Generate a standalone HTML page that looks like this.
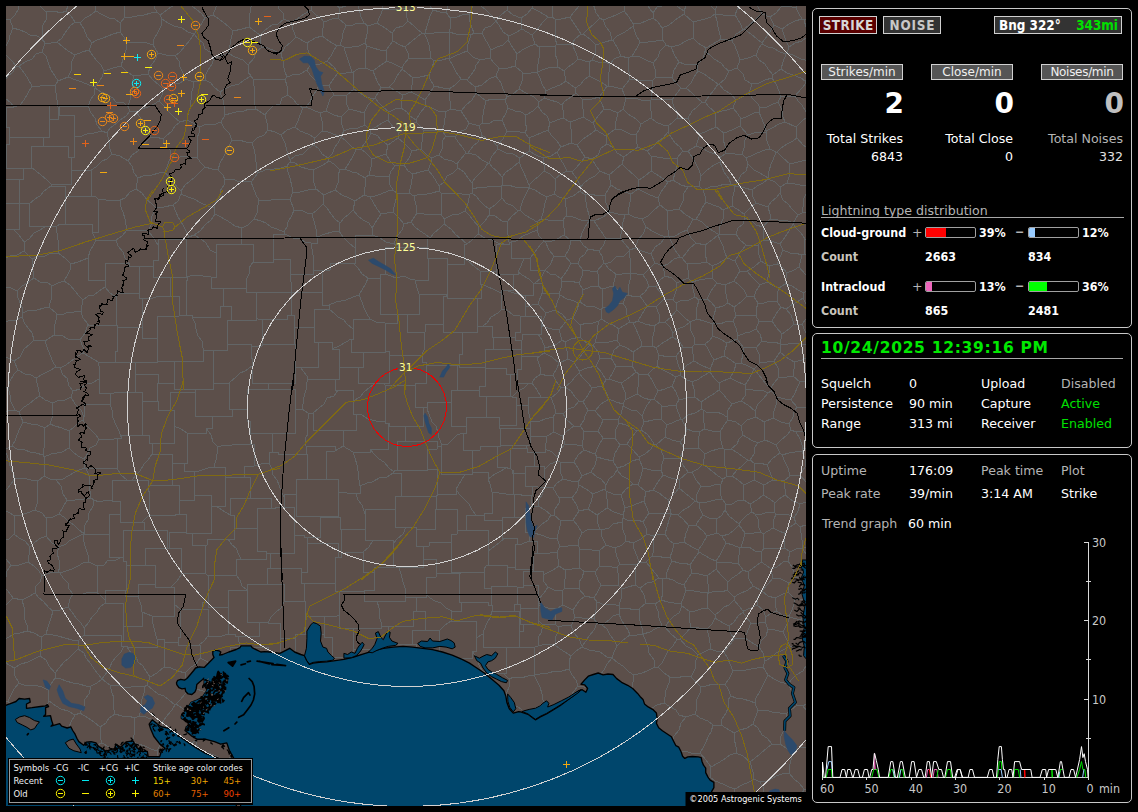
<!DOCTYPE html>
<html lang="en"><head><meta charset="utf-8"><title>Lightning Map</title>
<style>
html,body{margin:0;padding:0;background:#000;}
body{width:1138px;height:812px;overflow:hidden;position:relative;font-family:"DejaVu Sans","Liberation Sans",sans-serif;font-size:12.6px;color:#fff;}
#map{position:absolute;left:6px;top:6px;width:800px;height:800px;background:#5c4f4a;overflow:hidden;}
#map svg{position:absolute;left:0;top:0;}
.pnl{position:absolute;left:812px;width:318px;border:1px solid #c8c8c8;border-radius:5px;box-sizing:content-box;}
.t{position:absolute;white-space:nowrap;line-height:16px;height:16px;}
.r{text-align:right;}
.b{font-family:"DejaVu Sans Condensed","DejaVu Sans","Liberation Sans",sans-serif;font-weight:bold;font-size:12.4px;}
.g{color:#b4b4b4;}
.gr{color:#00e000;}
.btn{position:absolute;box-sizing:border-box;border:1px solid #d0d0d0;text-align:center;white-space:nowrap;}
.lbl{background:#555;height:16px;line-height:14px;font-size:12px;color:#f0f0f0;}
.big{position:absolute;font-family:"DejaVu Sans","Liberation Sans",sans-serif;font-weight:bold;font-size:28px;line-height:30px;height:30px;text-align:right;}
.bar{position:absolute;box-sizing:border-box;width:51px;height:11px;border:1px solid #a0a0a0;border-radius:2px;background:#000;overflow:hidden;}
.bar i{position:absolute;left:0;top:0;height:9px;display:block;}
.hr{position:absolute;height:1px;background:#a8a8a8;}
#legend{position:absolute;left:2px;top:752px;width:244px;height:45px;box-sizing:border-box;border:1px solid #a0a0a0;background:#000;font-size:9.6px;font-family:"DejaVu Sans Condensed","DejaVu Sans","Liberation Sans",sans-serif;}
#legend span{position:absolute;white-space:nowrap;line-height:12px;}
#copy{position:absolute;left:679px;top:786px;width:121px;height:14px;background:#000;font-size:9.6px;line-height:13px;font-family:"DejaVu Sans Condensed","DejaVu Sans","Liberation Sans",sans-serif;color:#fff;text-align:center;white-space:nowrap;}

</style></head>
<body>
<div id="map">
<svg width="800" height="800" viewBox="6 6 800 800">
<path fill="none" stroke="#626566" stroke-width="1" shape-rendering="crispEdges" d="M806 704l-3 2M806 710l-3-4M806 112l-4-7-4-4-3-5M806 83l0 0M795 96l7-8 4-5M729 71l-4 8-6 5M729 71l-4-3-4-5-7-4-3-3-6-5M705 51l-2 8-6 6M698 71l-1-6M698 71l6 3 7 5 7 5M718 84l1 0M737 68l-8 3M737 68l6 6 2 6 7 4M752 84l-3 9M749 93l-7 4-6 3M719 84l5 6 7 4 5 6M737 68l3-8M752 84l7-1 6-3 7-2M740 60l8-2 8-3M772 78l1-3M756 55l3 5 6 4 3 5 5 6M717 6l-2 4M711 6l4 4M740 60l-2-6-3-8-3-5M706 48l-1 3M706 48l7-4 8-5M721 39l11 2M693 38l5 5 8 5M693 38l1-9-1-7M693 22l4-1 8-2 6-2 4-3M721 39l-2-8-1-4-1-6-2-7M686 6l-2 5M715 10l1 4M693 22l-9-8M684 14l0-3M715 14l1 0M496 21l5-6 6-5M496 21l-5-6-5-5-5-4M507 10l0-4M507 10l6 5 8 3M532 6l0 2M521 18l6-4 5-6M552 6l0 2 0 9M552 17l-4 0M532 8l8 4 8 5M552 17l3 2M555 19l6 0 9-2M570 17l4-5 5-6M693 38l-7 3-7 4-8 2M697 65l-5-1-8 0-5-2M671 47l4 9 4 6M662 28l0 5 1 7M662 28l7-3 5-4 4-3 6-4M663 40l3 5M671 47l-5-2M663 40l-7 1-8 1-8 0M640 42l-3 6-5 8M632 56l8 1 6 3 7 3M666 45l-6 6-2 6-5 6M594 6l0 0M594 6l-1 0M311 243l2 12M311 243l-6-1-6-4-6 0-8-4M313 255l0 19-23 0M285 234l-12 0 0 25M290 274l0-15-17 0M317 237l8-3 7-2 7-1M317 237l0 6-6 0M353 263l-23 0 0 7M353 263l2 0 0-15M330 270l-17 0 0-15M355 248l-6-5-6-6-4-6M330 270l-8 0 0 24M290 274l1 8 1 10M292 292l30 0 0 2M449 59l4 7 3 6 5 7M449 59l0-1M434 86l-4-7-1-4M434 86l9 2 6 1M449 58l-7 2-8 1M461 79l-6 6-6 4M429 75l3-7 2-7M449 58l1-6-1-6 1-8-1-5M425 33l5 1 8-2 5 0 6 1M425 33l-1 0M424 33l3 6 2 6 1 6 1 7M434 61l-3-3M317 237l-1-8-2-8-2-7M339 231l1-8M340 223l-5-4-4-5-4-6-4-4M323 204l-6 6-5 4M284 232l1 2M284 232l3-5 1-5 4-7 2-5M312 214l-5-1-6-3-7 0M6 387l2 0M6 412l3-2 6 0M8 387l2 8 1 7 4 8M19 412l5-5 5-3 6-5 5-3M19 412l-4-2M18 370l7 4 6 1 5 3M18 370l-4 4-4 7-2 6M36 378l2 9 2 9M290 162l-3 4M290 162l5 1 6 4 7 2 5 1M287 166l1 6 2 6 2 9 1 5M293 192l7 0 8-2 8-1M313 170l0 6 1 7 2 6M323 204l1-9M324 195l-8-6M294 210l-4-11M290 199l3-7M42 52l4 4 3 9 2 5 4 6 3 5M42 52l3-9M45 43l6 0 6-1M68 77l-10 4M68 77l3-6 1-10 3-6M57 42l6 5 5 4 7 4M46 12l0 8-3 5-1 7 0 7M46 12l-4-4-2-2M19 6l-1 4-3 5-5 5M42 39l-5-3-7-1-5-3-5-2-7-2M13 28l-3-8M6 19l4 1M6 46l3-6 1-5 3-7M6 55l1 1 5 5 4 5M42 52l-6 2-4 5-7 3-6 4M45 43l-3-4M16 66l3 0M806 747l-1 0-6 1-8 4M803 706l-6-1M797 705l-6 5-4 3M787 713l-1 5-1 6-2 8-2 4-1 8M791 752l-5-4-6-4M232 755l-4 5M236 773l-4 0M228 760l1 3M229 765l1 1 2 7M232 773l0 1M240 806l-4-5 0 0M294 535l0 18-24 0M294 535l0-28-19 0M257 529l0-21 14 0M257 529l0 22 9 0M266 551l0 2 4 0M275 507l0 1-4 0M754 463l-4-3M754 463l6 0 7 2M750 460l4-6 1-7 3-4M767 465l5-6 8-6M776 445l4 8M776 445l-6-3-5-2M765 440l-7 3M796 127l6-6 4-3M796 127l-11-5M795 96l-7 0-7 1M781 97l-3 5M785 122l-2-5-1-7-4-8M749 93l3 5 6 6 2 4M781 97l-2-6-3-7-4-6M778 102l-7 3-4 2-7 1M805 81l-4-3-8-3-6-2-6-4M805 81l1-1M806 60l-1 0-4-1-8-4-6-2M781 69l2-7 3-8M787 53l-1 1M806 83l-1-2M773 75l8-6M756 55l3-7 3-4M762 44l6 3 5 1 7 4 6 2M731 184l-6 0-7 2-8 1-7 3M731 184l4 2M735 186l-1 6-2 8 0 6M706 202l-1-6-2-6M706 202l7 3 6 2 4 3M723 210l9-4M686 88l-5 0M686 88l5-5 3-6 4-6M679 62l-5 8-2 8M681 88l-4-4-5-6M653 63l2 6 1 8M672 78l-9-1-7 0M718 84l-4 6-5 6-4 6M733 108l3-8M733 108l-6 2-5 1-6 2M716 113l-7-6-4-5M686 88l6 5 4 4 6 5M681 88l-4 5-5 7M672 100l2 7 3 5 0 6M677 118l11 0M688 118l4-7 5-4 5-5M702 102l3 0M606 136l1 8M606 136l-10-6M607 144l-6 4-3 7-6 4M592 159l-7-2M596 130l-7 5-6 4-6 6M585 157l-4-6-4-6M570 122l6-2 7-3M570 122l1 7 0 7 0 7M583 117l10 6M596 130l-3-7M571 143l6 2M615 129l7 1 8 4 6 1M615 129l1-8 2-8M618 113l5-4M623 109l5 5 8 5 5 5M636 135l3-5 2-6M606 136l9-7M607 144l7 4 3 5 7 4M624 157l8-6 6-4M638 147l-2-6 0-6M604 109l-5 6-6 8M604 109l7 1 7 3M651 118l-10 6M651 118l5 4 7 3 5 1M638 147l9 4M647 151l6-4 4-5 6-4 5-6M668 126l0 6M781 7l0-1M781 7l7-1 8 2M796 8l1-2M789 47l6-4 7-2 4-3M789 47l-3-6-2-6-2-6M782 29l7-5 6-3 7-2M806 27l-2-7M804 20l-2-1M762 43l0 1M762 43l5-7 3-4 4-7M774 25l8 4M787 53l2-6M774 25l-4-8M770 17l6-4 5-6M796 8l3 6 3 5M806 19l-2 1M735 15l5 8 3 7M735 15l2-5 3-4M744 29l-1 1M744 29l5-4 6-5 7-6M762 14l-4-7-1-1M732 41l4-7 7-4M716 14l7 1 6 0 6 0M762 43l-5-4-6-5-7-5M770 17l-8-3M469 14l-7 1-5 2-7 1M469 14l0 5 3 9 2 5M474 33l-3 2M471 35l-7-1-8 0-7-2M449 32l2-6-1-8M496 21l0 0M473 6l-4 8M496 21l-5 5-6 2-3 5M482 33l-8 0M449 59l6-3 7-3 5-2M449 33l0-1M467 51l1-7 3-9M446 12l2-6M446 12l-6 0-7-2M430 6l3 4M450 18l-4-6M425 33l2-7 1-3 2-7 3-6M555 19l0 7 1 6-1 7 2 5M557 44l9 0 6 0M570 17l3 5 4 6 4 6M572 44l3-5 6-5M600 18l-6 6-6 5-5 5M600 18l-4-5-2-7M581 34l2 0M562 105l1 5 0 8M562 105l3-4 6-4 5-4M563 118l7 4M583 117l0-8-1-10M576 93l6 6M604 109l-2-5-3-7M582 99l10 0 7-2M662 28l-4-6-5-4M653 18l-7 3-5 2-8 1M640 42l-4-7-3-9M633 24l0 2M625 6l-1 5M600 18l3 2M624 11l-8 4-5 2-8 3M610 64l-5-2-7 0-6-2M610 64l4-5 7-3M621 56l-3-7-5-9M596 45l-1 9-3 6M596 45l9-3 7-2M612 40l1 0M628 58l-7-2M628 58l4-2M633 26l-5 4-5 3-6 3-4 4M583 34l7 5 6 6M603 20l3 7 4 5 2 8M633 24l-4-7-5-6M648 6l2 3 3 4M653 13l4-6 5-1M653 18l0-5M684 11l-6-4-1-1M296 494l0 22 24 0M296 494l-12 0 0 3M304 537l16 0 0-20M304 537l0-2-10 0M284 497l0 10-9 0M320 516l0 1 0 0M472 472l16 0 0 7M472 472l0 2-7 0M488 479l2 5 2 8M492 492l0 21-8 0M484 513l0 2-8 0M465 474l-4 7-5 8M476 515l-4-5-3-6-5-5-5-5-3-5M484 513l0 7 18 0M502 520l0 18 3 0M466 530l0-15 10 0M466 530l22 0 0 21M505 538l-5 4-5 4-7 5M465 474l-24 0 0-28M441 446l-4 0 0 3M456 489l0 5-19 0M437 494l0-25-10 0M437 449l-10 0 0 20M537 72l8-3 6-2 7 0M537 72l1-8 1-6 0-4 0-7M558 67l-1-8-2-5 0-8M539 47l8-1 8 0M483 326l-6 0 0-1M483 326l4-3 4-6 7-4 4-4M469 298l8 0 0 27M469 298l12 0 0-14M502 309l-1 0 0-16M481 284l7 3 5 2 8 4M296 494l0-15 11 0M269 463l3 6 1 6 4 5 2 5 3 8 2 4M269 463l0-11 9 0M307 479l0-25-10 0M278 452l0 2 19 0M544 98l-5 4M544 98l2-7M539 102l-5-5-8-4-7-4M537 72l3 6 2 6 4 7M537 72l-6 1-8 0M519 89l3-8 1-8M509 36l-1 4M509 36l6-3 7-4M508 40l5 8 4 6M517 54l5-4 6-3 7-3M522 29l10 6M535 44l-3-9M496 21l3 4 4 7 6 4M482 33l3 6 3 5 3 6M491 50l6-3 6-2 5-5M521 18l1 11M537 72l0 0M539 47l-4-3M523 73l-8-7M515 66l2-12M548 17l-6 6-5 7-5 5M557 44l-2 2M480 60l10-2M480 60l-4 5-1 4-4 6-4 5M490 58l4 5 5 5M467 80l8 7M475 87l7-2 7-6 7-3M496 76l3-8M467 51l6 6 7 3M491 50l-1 8M461 79l6 1M515 66l-7 2-9 0M519 89l-6 5-6 3M507 97l-4-8-2-6-5-7M335 190l3-7 0-8 2-5M335 190l-11 5M313 170l6-3 4-2 6-4M329 161l5 3 6 6M389 87l7 4 7 4M389 87l5-5 3-6 5-7M413 78l-6-5-5-4M413 78l-1 7-1 7M411 92l-8 3M434 86l-4 7-5 7M425 100l-8-5-6-3M429 75l-9 2-7 1M425 100l1 6M426 106l-6 7-4 7M401 108l6 4 3 4 6 4M401 108l0-6 2-7M404 165l4 6 5 3M404 165l5-7 3-7M431 158l-5-4-5-5M431 158l0 5-3 7M412 151l9-2M413 174l7-2 8-2M439 155l-8 3M439 155l5 4 8 2 5 3M457 164l1 4M458 168l-5 5-6 3-3 6-5 4M428 170l5 6 3 5 3 5M355 248l0-13 18 0M340 223l4-5 5-4 4-4M373 235l-1-7M353 210l5 6 5 4 6 3 3 5M335 190l7 5 7 3 6 3M353 210l2-9M18 370l-4-9M6 357l2 1 6 3M115 351l2 0 0-24M115 351l0 11 19 0M117 327l25 0 0 0M134 362l23 0 0-22M142 327l0 11 15 0M157 338l0 0 0 2M99 379l0 14 15 0M99 379l1-9-2-8M114 393l0-1 4 0M118 392l17 0 0-18M98 362l17 0 0-11M135 374l0-12-1 0M179 316l0-20-20 0M179 316l-22 0 0 22M145 298l8 0 6-2M145 298l-3 0 0 29M99 379l-7 4-6 1-6 5-7 2M98 362l-8-5-7-4M73 391l-4-5-2-8-4-3-3-7M83 353l-5 3-7 5-5 4-6 3M135 374l23 0 0 9M174 361l0 6 0 0M174 361l-17 0 0-21M158 383l16 0 0-16M55 86l1 7 1 7 1 7 0 7M55 86l-7-1-8 1-8 0M32 86l-4 7-4 7-4 5M20 105l29 0 0 14M49 119l9 0 0-5M58 81l-3 5M19 66l6 8 3 5 4 7M68 77l8 3 6 2 7 3 6 2M59 115l0-9 29 0M59 115l-1-1M88 106l3-7 3-4 1-7M95 87l0 1M59 115l15 0 0 22M88 106l3 7 4 5 2 7 5 6M102 131l-8 2-5 0-7 3-8 1M130 111l-4 5-6 4-3 3-7 5-3 5M130 111l-2-4M128 107l-4-4-8-1-3-4-7-4-5-2-6-4M102 131l5 2M6 127l0-20 8 0M6 127l0 0M14 107l-4-5-4-3M20 105l-6 2M49 119l0 18-10 0M9 136l0 1 30 0M9 136l0-9-3 0M9 136l0 8-3 0M6 144l0 0M16 66l-3 6-5 4-2 3M431 58l-8 0-8 1-6-1M402 69l0-1M409 58l-5 6-2 4M401 108l-6 1-6 3M389 112l-6-5-4-4-4-5M389 87l-8 1M381 88l-6 10M262 47l6 1 7 3 6 3M262 47l-6 5-2 6-6 7M248 65l0 7 3 4M281 54l2 7 0 3 2 8 2 5M253 79l-2-3M253 79l6 0 6 1 9-1 4 0 7 0M287 77l-2 2M96 11l-1-5 0 0M96 11l-7 5-4 2-5 5M66 11l5 5 4 6M66 11l2-5M80 23l-5-1M57 42l5-4 3-5 5-7 5-4M46 12l8-1 7 2 5-2M472 472l0-22 8 0M442 445l6-1 5-5 4-4 6-2M442 445l-1 1M480 450l-17 0 0-17M442 445l-3-7-1-5-2-7-4-4-3-8-2-5M451 402l-24 0 0 7M451 402l0 24 15 0M463 433l3 0 0-7M806 789l-2 0M791 752l0 8-1 4-1 9M804 789l-5-6-5-4-5-6M804 789l-2 5-3 7-1 5M750 762l5-4 5-4 7-6 5-4M750 762l-7-6-7-3M736 753l0-6-2-9 0-5M772 744l-5-6-5-3-4-7-5-4M753 724l-6 4-7 2-6 3M787 713l-7 0-8-1-6-2-8 1M780 744l-8 0M758 711l-3 7-2 6M797 705l-3-7-3-8-3-6M758 711l-3-8M755 703l1-5 4-7 3-6 2-4 3-6M788 684l-8-2-6-3-6-4M788 684l4-5 4-4 7-4 3-5M803 448l-3-9-4-7M803 448l-1 3M776 445l5-5 6-5 4-5M780 453l2 2M791 430l5 2M802 451l-7 1-6 1-7 2M767 465l3 7 3 8M790 476l-2-8-3-6-3-7M790 476l-6 5M773 480l11 1M805 649l1 1M805 649l1-6M788 592l-7 3-6 3M788 592l1-9M789 583l-8-4-8-1M775 598l-7-2-6-5M773 578l-5 6-6 7M484 569l0 19 7 0M484 569l0 3-24 0M460 572l0 1-1 0M459 573l0 29 2 0M461 602l27 0 0 3M488 605l3 0 0-17M507 567l0-2-20 0M507 567l0 19 9 0M487 565l-3 4M516 586l-25 0 0 2M457 534l0-4 9 0M457 534l-6 0 0 8M488 551l0 14-1 0M451 542l0 30 9 0M436 577l0-4 23 0M436 577l0-18-13 0M451 542l-22 0 0 4M423 559l0-13 6 0M269 463l-8 1-7 2M254 466l-10 0 0 11M271 508l0-10-21 0M244 477l6 0 0 21M267 584l0-16 9 0M267 584l17 0 0 18M276 568l25 0 0 4M284 602l0-1 20 0M304 601l0-18 5 0M309 583l-8 0 0-11M307 543l0-6-3 0M307 543l0 29-6 0M270 553l0 15 6 0M268 623l12 0 0 14M268 623l0-1-9 0M259 622l0 14-21 0M280 637l0 16M268 652l0-5-16 0M241 647l-1 0M240 647l-2-11M247 590l0 32 12 0M247 590l0-6 20 0M284 602l-3 6-5 4-5 5-3 6M295 638l-15 0 0-1M295 638l0 14M230 652l0-5 10 0M228 607l0 27 7 0M228 607l-20 0 0-5M202 609l0-7 6 0M202 609l6 0 0 27M208 636l6 0 8 0 6-2 7 0M247 590l0 0 0 0M247 590l-19 0 0 17M238 636l-3 0 0-2M209 663l-3-2-6-3M199 645l1 0 0 13M199 645l5-4 4-5M326 479l0-28 9 0M326 479l12 0 0 13M338 492l5 0 8 2 5-1M353 452l-10-6M353 452l2 6 2 7 1 6 1 9 1 6M360 486l0 7-4 0M343 446l-8 5M307 479l0 0 19 0M297 454l9 0 0-8M306 446l29 0 0 5M320 516l18 0 0-24M340 529l0-12-20 0M340 529l25 0 0-14M365 515l0 0 0-1M365 514l-3-9-4-5-2-7M313 413l0 17 30 0M313 413l-5 0M343 430l0 0 0 16M308 413l0 6-1 6 1 9-3 5 1 7M728 582l-7-7-5-6M728 582l4-4 5-3 6-5M743 570l-5-7M738 563l-6 0-9-1-6 0M716 569l1-7M707 576l1 8 1 9M707 576l9-7M727 590l-5 2-7-1-6 2M727 590l1-8M734 597l-7-7M734 597l5-3 9-4 5-4M753 586l-4-7-1-7M748 572l-5-2M726 543l-3 6-3 6-4 6M726 543l7 2 7 3M716 561l1 1M740 548l-1 7-1 8M794 518l-5-3-6-1-7 0M794 518l4-7 2-7M800 504l-7-3-8-6M785 495l-6 4-4 4M775 503l-1 9M776 514l-2-2M754 463l0 10 0 7M773 480l-9 5M754 480l10 5M784 481l1 8 0 6M775 503l-5-4-7-4M764 485l-1 10M533 569l0-16 4 0M533 569l-18 0 0-8M537 553l0-12-8 0M515 561l0-17 2 0M529 541l-7 3-5 0M505 538l12 0 0 6M507 567l8 0 0-6M692 573l-4 5-4 7M692 573l7 1 8 2M708 593l1 0M708 593l-8-1-6-1-8-1M686 590l-2-5M619 614l2 5 3 5 4 6 2 5M619 614l-6 2-4 4-7 5M602 625l5 4 3 6 4 5 3 6M630 635l-7 5-6 6M620 608l7 0 7 2 5-1M620 608l-1 6M639 609l0 7 1 5 2 7 0 6M642 634l-5 1-7 0M620 608l-1-2M597 623l5 2M597 623l-3-4M594 619l2-9 1-8M619 606l-6-2-8 1-8-3M597 623l-3 7-5 6-3 5-4 5M582 647l0-1M582 647l7 3 6 1 5 1 7 5 5 1M612 658l0 0M612 658l2-6 3-6M571 656l-6-4-5-3-5-4M571 656l5-5 6-4M555 645l0-7 3-6 0-5M582 646l-3-7-5-6-3-7M571 626l-5-1-8 2M594 619l-6-1-6 0-7-1M571 626l4-9M692 573l-2-8M716 561l-5-2-7-4-5-3M690 565l4-6 5-7M726 543l-4-7M722 536l-5-3M717 533l-10 3M707 536l-5 9-4 5M699 552l-1-2M806 147l-3-2-6-7M806 160l-8 2-8 2M797 138l-4 3-6 3-6 4-4 4M777 152l6 6 7 6M796 127l1 11M785 122l-6 2-7 4-6 3M760 108l-1 4M759 112l2 5 3 7 2 7M733 108l5 6 3 5M759 112l-5 1-6 3-7 3M679 209l7 6 7 4M679 209l-11 2M693 219l-3 6-3 5M668 211l-1 6 0 6 1 7 0 6M668 236l1 0M669 236l6 0 7-4 5-2M701 176l-2 10M701 176l-2-6-3-6-4-7-4-6M699 186l-11 1M688 187l-7-2-8-5M673 180l2-7 2-8 0-7M677 158l6-7M688 151l-5 0M720 162l2 5 2 5 5 7 2 5M720 162l-6 3-7 5-6 6M703 190l-4-4M706 202l-4 6-2 5-4 6M679 209l4-8 1-8 4-6M693 219l3 0M668 182l5-2M668 182l-4 6-3 4-3 6M658 198l2 7M668 211l-8-6M668 182l-6-4-6-4-5-3M651 171l0-7 0-8M651 156l6 1 6 1 8 0 6 0M647 151l4 5M668 132l3 5 4 6 4 3 4 5M696 219l6 3 4 4 7 5 5 3M723 210l0 9-3 7-1 8M718 234l1 0M735 186l0 0M732 206l5 3 7 5M752 190l-7-2-10-2M752 190l1 7 3 6M744 214l6-6 6-5M780 187l0 6M780 187l-5-5-7-3M768 179l-5 4-6 3-5 4M780 193l-3 4-6 5-3 5M756 203l12 4M794 324l-5 5-7 5M794 324l-3-9-5-6M782 334l-6-7-4-6M772 321l4-7 5-7M786 309l-5-2M767 282l5 3 7 3M767 282l2-9 0-7M787 273l-5-6-5-3M787 273l-2 11M779 288l6-4M769 266l8-2M783 250l-3 7-3 7M783 250l7 3 5 0 7 2M799 267l3-12M799 267l-5 3-7 3M777 302l4 5M777 302l0-8 2-6M803 298l1-5M803 298l-6 4-4 2-7 5M804 293l-6-3-6-4-7-2M651 100l-7 1-6-2-5-1-7 1M651 100l0-1M651 99l1-8 0-10M652 81l-6-1-8 0-8-1M630 79l-4 5-4 5M622 89l4 10M651 118l0-7-1-6 1-5M623 109l3-10M672 100l-7-1-6 1-8-1M677 118l-5 5-4 3M656 77l-4 4M628 58l0 6 1 8 1 7M608 86l0-7 1-7 1-8M608 86l6 1 8 2M608 86l-1 0M607 86l-4 6-4 5M696 146l4-12M696 146l6 2 7 4 6 2 6 3M700 134l7-3 9-4M721 157l5-4M726 153l-1-7-2-7 1-6M724 133l-8-6M688 118l3 7 3 5 6 4M688 151l8-5M720 162l1-5M716 113l-1 6 1 8M741 119l-1 7M740 126l-8 4-8 3M740 126l8 9M726 153l9 1 7 0M742 154l2-6 1-8 3-5M766 131l0 2M766 133l-6-1-6 1-6 2M578 59l11 3M578 59l-4 4-6 4-4 4M589 62l0 8 0 6M589 76l-5 4-4 5-5 3M564 71l2 10M566 81l9 7M572 44l4 9 2 6M592 60l-3 2M558 67l6 4M607 86l-6-4-6-3-6-3M576 93l-1-5M546 91l6-3 8-3 6-4M544 98l6 2 7 2 5 3M436 495l0 14-1 0M436 495l0 1-35 0M435 509l0 20-19 0M395 509l0-13 6 0M395 509l0 18 11 0M406 527l10 0 0 2M457 534l0-25-22 0M437 494l0 1-1 0M429 546l-13 0 0-17M393 473l8 0 0 23M393 473l-6 4-6 0-9 5-5 1-7 3M365 514l0-5 30 0M437 449l0-8-32 0M427 469l0 1-30 0M405 441l-8 0 0 29M393 473l0-1 1 0M353 452l17 0 0-3M370 449l4 5 5 5 5 3 5 6 5 4M394 472l0-2 3 0M469 298l-22 0 0-2M480 271l0 13 1 0M480 271l-5-4-7-6-4-3M464 258l0 6-17 0M447 296l0-32 0 0M407 314l12 0 0-20M407 314l0 18 18 0M425 332l0-8 18 0M443 324l0-28 3 0M419 294l27 0 0 2M462 332l-19 0 0-8M462 332l0 22-3 0M459 354l0 11-17 0M442 365l-16 0 0-3M422 355l3-8-1-6 1-9M422 355l0 7 4 0M477 325l0 7-15 0M447 296l-1 0 0 0M332 349l0-7-14 0M332 349l7-3 7-4 5-3M329 309l-15 0 0 23M329 309l6 5 3 3 6 3 3 4 6 5M314 332l0 10 4 0M353 329l0 10-2 0M397 314l-17 0 0-36M397 314l0 9-12 0M385 323l-9-1-6-3M370 319l-3-5-3-6-2-6-3-7M359 295l3-5 4-7 2-5M368 278l0 0 12 0M329 305l0 0 0 4M329 305l7-3 5-1 5-1 7-3 6-2M353 329l0-10 17 0M353 263l5 5 4 6 6 4M329 305l-7 0 0-11M480 271l16 0 0-9M501 293l0-3 4 0M496 262l0 12 17 0M505 290l8 0 0-16M464 258l0-14 3 0M496 262l0-18 8 0M504 244l-6-1-6-3-7-2-7-4M467 244l5-4 6-6M507 222l0 7 1 6 1 7M507 222l-5-1-7-5-6-1M489 215l-4 6-6 6M504 244l5 0 0-2M479 227l-1 7M646 227l6 4 6 3 7 3M646 227l-3 7-5 6-3 8M665 237l-4 6-6 4-4 7M635 248l7 3 9 3M660 205l-6 5-6 6-6 3M642 219l4 8M668 236l-3 1M571 241l-7-6M571 241l9-1M580 240l2-7 3-6 4-6M566 216l7 1 8 3 8 1M566 216l-3 4M563 220l1 8 0 7M658 198l-8-3-4-2-8-4M642 219l-8-2-6-3M628 214l1-7 1-5 1-8M638 189l-7 5M651 171l-6 5-6 4M638 189l1-9M624 157l-2 7M639 180l-5-5-7-6-5-5M605 195l6-10M605 195l-7 1-7-2-6 1M585 195l-5-4M611 185l-2-10M581 187l-1 4M581 187l3-4 5-4 6-3 5-5M600 171l9 4M628 214l-3 1M625 215l-7-1-8-2M610 212l-4-9-1-8M631 194l-6-2-8-3-6-4M590 220l-1-5-2-7-1-6-1-7M590 220l4 1M594 221l9-4 7-5M565 199l1 8 0 9M565 199l8-3 7-5M589 221l1-1M622 164l-7 6-6 5M592 159l4 7 4 5M585 157l-4 5-5 6-4 4M572 172l5 7 4 8M307 376l0 3 28 0M307 376l0 6-1 8-2 7-1 7-1 5M313 413l6-5 5-4 3-6 7-2 4-6M308 413l-6-4M338 390l-3 0 0-11M307 376l-7-9M300 367l18 0 0-25M332 349l7 0 0 23M335 379l4 0 0-7M272 433l23 0 0-24M272 433l-22 0 0-12M247 415l0 6 3 0M247 415l0-26 22 0M269 389l26 0 0 20M278 452l-6 0 0-19M302 409l-7 0M239 444l11 0 0-23M239 444l15 0 0 22M300 367l0 0-5 0M268 383l27 0 0-16M268 383l1 6M210 350l17 0 0-6M210 350l3 0 0 26M227 344l24 0 0 14M229 383l-16 0 0-7M229 383l7-6 4-4 5-2 7-5M252 366l0-8-1 0M174 361l29 0 0-13M203 348l0 2 7 0M174 367l0 22 21 0M195 389l18 0 0-13M212 416l20 0 0-7M212 416l-17 0 0-24M232 409l-3 0 0-26M195 392l0 0 0-3M232 409l15 0 0 6M268 383l-16 0 0-17M216 253l0 24-5 0M216 253l-6-3-4-7-5-4-7-4M194 235l-5 2M186 239l3-2M186 239l0 37 4 0M211 277l-8-1-6-1-7 1M179 316l0-1 7 0M170 277l0 19-11 0M170 277l0 0 18 0M186 315l1-6-1-6 0-8 1-4-1-7 2-7M203 348l-1-7-4-5-2-7-1-6-3-6M186 315l6 0 0 2M294 327l0-12-7 0M294 327l0 17-13 0M287 315l0 4-29 0M258 319l4 0 0 27M281 344l-19 0 0 2M292 292l-1 0 0 0M291 292l0 23-4 0M314 332l0-5-20 0M295 367l0-23-14 0M251 358l0-12 11 0M457 164l3-4 6-7M458 168l6 4 4 6 4 5M472 183l3-5 5-5 5-5 3-5M488 163l-6-3-6-5-8-2M468 153l-2 0M498 149l-1-3M498 149l-6 7-3 7M489 163l-1 0M497 146l-4-5-6-2-5-4M468 153l5-7 5-4 4-7M461 111l4 6 4 6M461 111l-10-2M445 112l0 6-1 7-2 6M445 112l6-3M469 123l-3 6-7 3-4 5M455 137l-9-1M446 136l-4-5M449 89l0 5 1 7 1 8M476 93l-4 7-6 5-5 6M476 93l-1-6M426 106l6 2 6 3 7 1M416 120l0 2M424 131l-3-4-5-5M424 131l8-1 10 1M466 153l-3-5-5-6-3-5M482 135l-3-9M479 126l-10-3M439 155l3-6 0-8 4-5M421 149l1-7 0-5 2-6M370 130l1 3M370 130l6-3 6-4 6-3M371 133l7 3 3 4 7 5M388 120l5 7 6 6M388 145l10-7M398 138l1-5M361 149l3-5 4-5 3-6M361 149l5 4 6 6M372 159l8-3 6-2M386 154l2-9M389 112l-1 8M416 122l-7 4-5 3-5 4M404 165l-9 1M412 151l-4-4-4-4-6-5M395 166l-5-5-4-7M341 136l0 1M341 136l-5-1-8-3-6-1M341 137l-3 6-3 4-3 7-4 4M328 158l-6-4-3-5-5-4M322 131l-7 7M314 145l1-7M356 150l-5-4-5-5-5-4M356 150l-3 6-4 7-4 6M329 161l-1-3M345 169l-5 1M290 162l0-2M290 160l5-4 8-2 6-6 5-3M320 113l2 8 0 10M320 113l-7-3-7-3M306 107l-3 1M303 108l-3 7-2 6-3 6M295 127l5 4 8 3 7 4M290 160l-2-5-2-8-1-4-4-8M281 135l6-5 8-3M349 109l-8 8M349 109l8 2 7 2M365 125l-7 3-7 0-7 3M365 125l-1-12M344 131l-2-6-1-8M361 149l-5 1M370 130l-5-5M341 136l3-5M375 98l-1 1M374 99l-6 6-4 8M320 113l6-2M326 111l8 4 7 2M186 239l-28 0 0 6M189 237l-3-6-3-6-5-8-2-5-3-7M173 205l-9 2-8 1M156 208l-4 8-1 9-3 6M148 231l5 6 5 8M136 189l6 4 5 7 4 3 5 5M136 189l-6 3-5 6-5 2M120 200l0 5 3 7 2 7 1 6 1 5M148 231l-6-1-9 0-6 0M170 277l-17 0 0-17M190 276l-2 0 0 1M158 245l0 15-5 0M171 156l-3 8-3 8M171 156l-1-6-5-4-2-7M163 139l-7-2-5 0M151 137l-5 5-5 3-3 6-6 4-4 6M165 172l-6 1-7 2-9 1-5 2M138 178l-4-5-2-7-4-5M197 157l3 5 5 5M197 157l-8 0-5-1-8 2-5-2M181 191l4-6 5-4 5-4 4-4 6-6M181 191l-4-4-4-6-5-5-3-4M136 112l-6-1M136 112l4 5 3 8 4 5 4 7M112 154l-3-7 0-6-2-8M112 154l8 2 8 5M136 189l2-11M173 205l5-4 3-7M181 194l0-3M145 298l-6 0 0-5M153 260l0 6-13 0M139 293l0-27 1 0M127 230l-5 6-6 4M116 240l2 6 5 6 2 6 4 5M129 263l0 3 11 0M74 137l0 20-6 0M39 137l4 0 0 9M43 146l25 0 0 11M112 154l-5 5-5 2-6 6-5 3M91 170l-20 0 0-7M68 157l3 0 0 6M407 6l-1 2M382 6l1 3M406 8l-6 1-8 0-9 0M402 68l-8-4-7-3M381 88l-4-7-2-5-2-5M387 61l-6 4-8 6M393 41l7 4 5 2M393 41l-1-8M392 33l4-5 7-2 5-5M405 47l7-6 5-4 5-4M422 33l-5-4-3-3-6-5M409 58l-1-5-3-6M387 61l-1-11M386 50l7-9M406 8l0 7 2 6M383 9l-3 7-3 7M377 23l8 5 7 5M424 33l-2 0M346 6l-1 0-5 2M340 8l-3-2M262 47l-2-7 0-5M248 65l-5-5-8-3-7-4M249 27l4 3 7 5M249 27l-7 2-9 2M233 31l-2 8-1 6-2 8M136 112l5-3 7-2 6-3 5-3M163 139l3-3 6-5 3-5 5-4M159 101l6 6 4 5 5 5 6 5M199 127l0 6-2 5 0 7 1 7-1 5M199 127l-6-4-6-3M187 120l-7 2M220 92l5-3 6-3 8-2 5-4 7-4M220 92l3 8 1 6 1 9M253 79l1 7 1 6-1 5 0 5 2 7M225 115l7-2 4-1 8-1 5-2 7 0M303 108l-6-4-4-5-5-4M288 95l-6 3-2 6-7 2-5 5-3 4M281 135l-6-3-7-2M268 130l-1-7-2-8M288 95l-1-9-2-7M265 115l-9-6M284 19l-6 5-6 1-7 5-5 5M284 19l-1-6-4-4-1-3M249 27l0-7 1-7 1-6 0-1M217 6l-1 1-3 8M213 15l6 4 5 4 4 3 5 5M806 319l0 0-4 5M802 324l3 7 1 2M794 324l8 0M803 298l3 6M782 334l-2 10M780 344l1 0M781 344l7 0 8-1 5 1 5 0M508 517l17 0 0 1M508 517l6 0 0-23M531 508l-6 0 0 10M531 508l0-13-10 0M521 495l0-1-7 0M492 492l7 1 7 1 7 0M502 520l0-3 6 0M513 494l0 0 1 0M488 479l7-5 6-3 6-4M480 450l0-4 17 0M497 446l0 21 10 0M803 448l3 0M796 432l9-1 1-1M789 773l-7 1-6 2-8 5-8 1M750 762l3 10 1 7M754 779l6 3M734 597l0 3M708 593l-1 7 1 8M734 600l-5 5-5 2-5 5-4 3M708 608l7 7M790 646l-7 4-7 3-4 4-7 4M790 646l-3-6-4-8M783 632l-8-2-7-1M768 629l-2 7-5 5-2 6M759 647l4 6 2 8M790 646l8 1 7 2M768 675l-5-8M763 667l2-6M805 467l-5 8M805 467l1-1M800 475l6 7M790 476l10-1M802 451l3 8 0 8M800 504l6-2M806 599l-4 0-7 0M806 616l-6 4M795 599l-1 5-2 6-3 6M800 620l-10-3M790 617l-1-1M788 592l7 7M789 583l6-6M806 577l-11 0M806 632l-3-5-3-7M775 598l0 6 2 7M777 611l5 4 7 1M783 632l4-8 3-7M806 547l-4 1M806 525l-1 0-5 2M802 548l0-8-1-7-1-6M806 555l0-1-4-6M802 548l0 0M794 518l2 5M776 514l-2 5-1 9M773 528l6 3 5 2M784 533l6-6 6-4M796 523l4 4M788 561l2-9M788 561l-5 1-6 5-6 2M771 569l-5-4-5-3M785 548l5 4M785 548l-6 0-7 0-8 0M761 562l1-11M764 548l-2 3M795 577l-3-10-4-6M802 548l-6 1-6 3M773 578l-2-9M753 586l9 5M762 591l0 0M748 572l8-6 5-4M784 533l0 9 1 6M773 528l-10 6M763 534l0 8 1 6M741 547l8 0 6 4 7 0M741 547l-1 1M534 571l9 0 0 4M534 571l-1 0 0-2M537 553l7 0 6 0 7-1M557 552l1 7 1 7M543 575l6-3 4-2 6-4M483 634l0 13 23 0M483 634l1-4 3-7 3-5 2-7M506 647l13 0 0-8M492 611l0 0 1 0M493 611l26 0 0 20M519 639l0 0 0-8M538 600l0-15-15 0M538 600l0 3 0 0M538 603l0 5-18 0M523 585l0 2-6 0M517 587l0 17-3 0M520 608l0-4-6 0M534 571l-11 0 0 14M548 587l-4-5-1-7M548 587l-4 6-6 7M516 586l1 1M492 611l0-6-4 0M493 611l21 0 0-7M523 624l0 7-4 0M523 624l-3 0 0-16M483 634l-7 4M506 647l0 26-3 0M483 672l8-1 5 3 7-1M483 672l-4-7-3-8-4-6M472 651l4 0 0-13M483 672l0 0M472 651l0 7-12 0M436 577l-10 0 0 17M461 602l0 9-9 0M426 594l4 4 5 3 6 2 5 5 6 3M476 638l0-17-25 0M439 651l0-20M439 631l6-6 6-4M452 611l-1 0 0 10M307 543l31 0 0 14M309 583l26 0 0-9M335 574l0-17 3 0M340 529l1 0 0 25M338 557l3 0 0-3M257 529l0-1-23 0M250 498l-20 0 0 17M234 528l0-13-4 0M244 477l0 0-19 0M230 515l-8-5-6-4M216 506l9 0 0-29M152 616l22 0 0-12M152 616l1 8 2 8 2 7M178 637l0 5-14 0M178 637l2 0 0-28M180 609l-6-5M157 639l7 0 0 3M142 612l10 4M142 612l-1-7-3-9M171 587l3 0 0 17M171 587l-16 0 0-3M138 596l0-12 17 0M199 645l-21 0 0-8M202 609l-22 0 0 0M228 760l-8-2-6-3-7-2-3-1M142 612l0 14-19 0M124 646l-3 0 0-5M124 646l3 0 0 1M127 647l30 0 0-8M123 626l0 15-2 0M761 532l-3-6 0-7-3-5M761 532l-7 1-9 0M745 533l-6-8M752 512l3 2M752 512l-5 3-5 5-3 4M739 525l0-1M774 512l-6 0-6 2-7 0M763 534l-2-2M741 547l2-6 2-8M722 536l7-2 5-4 5-5M763 495l-6 5-7 4M750 504l2 8M717 533l-1-6 1-8M717 519l5-4 3-5M725 510l4 6 5 4 5 4M754 480l-10 5M750 504l-6-4M744 500l-1-6 1-9M725 510l1-6M744 500l-7 1-5 3-6 0M750 460l-2 0M748 460l-7 7-4 3-5 6M744 485l-6-5-6-4M557 552l3-6M565 570l-6-4M565 570l7-1 7-1M580 549l-1 6 1 6-1 7M580 549l-2-4M560 546l8 0 10-1M639 609l7-6M646 603l-2-8-4-7M619 606l2-7 1-10M640 588l-5-3M635 585l-7 2-6 2M597 602l-3-4M594 598l4-7 3-6M601 585l8 0 9 0M622 589l-4-4M672 561l-2-4M672 561l-3 6-2 5-1 6M670 557l-6 1-5-2-7 0M659 578l-4-5-4-5-5-6M659 578l4 1M652 556l-6 6M666 578l-3 1M674 544l-2 8-2 5M674 544l10-2M684 542l8 5 6 3M690 565l-5-2-6 0-7-2M684 585l-6-2-5-3-7-2M674 544l-5-4-4-6M665 534l-7 0-5 2M653 536l0 6 1 8-2 6M640 588l7-5 5-1 7-4M639 562l-3 3M639 562l7 0M635 585l1-6-1-8 1-6M661 600l2-7-1-6 1-8M661 600l-6 4M655 604l-9-1M661 600l7 2 6 1 7 1M681 604l3-8 2-6M563 605l10 5M563 605l-1-6 0-8M573 610l4-6 3-4 5-4M564 589l-2 2M564 589l9-1 6 1M579 589l6 7M575 617l-2-7M594 598l-9-2M548 587l6 3 8 1M565 570l1 6-2 6 0 7M579 568l5 3M584 571l-2 7-3 4 0 7M601 585l-3-5-3-8M584 571l11 1M540 605l-2 0 0 15M540 605l8 3 8 1M556 609l-1 6 0 9M555 624l-12 1M543 625l-5-5M523 624l15 0 0-4M538 603l2 0 0 2M563 605l-7 4M558 627l-3-3M555 645l-9-1-8 2M538 646l0-8 3-5 2-8M535 647l0-1 3 0M535 647l-16 0 0-8M653 536l-6-2M639 562l-2-6-3-7-1-6M647 534l-6 5-8 4M678 515l4-4 8-5 5-5M678 515l5 4 6 7M696 525l-7 1M696 525l3-5 4-5M703 515l-3-6-1-6M699 503l-3-2M696 501l-1 0M671 513l0 1M671 513l-2-7-1-6M671 514l7 1M679 488l-4 5-7 7M679 488l6 5 5 4 5 4M684 542l2-9 3-7M665 534l2-7 2-7 2-6M707 536l-4-5-7-6M717 519l-8-1-6-3M722 499l4 5M722 499l-7 1-8 2-8 1M701 486l-4 8-1 7M701 486l7 1 6-2 7-1M722 499l-2-7 1-8M780 187l7-4M787 183l8 1 5 1 6 0M780 193l3 7 5 4 4 5 6 6M798 215l4-2M806 194l-2 4-1 9-1 6M787 183l2-6 0-5 1-8M802 213l4-1M805 239l-4-6-4-4-4-5M805 239l-1 8 0 7M783 250l-3-6M804 254l-2 1M780 244l5-7 4-6 4-7M798 215l-5 8M768 207l2 7 0 5M770 219l8 1 8 0 7 3M805 239l1 0M793 224l0-1M736 234l4 6 6 5M736 234l2-6 5-4 2-6M745 218l7 3 4 4 7 2M746 245l12 0M763 227l0 7 0 6M758 245l5-5M719 234l7 0 10 0M744 214l1 4M770 219l-7 8M780 244l-9-3-8-1M761 261l-3-9 0-7M761 261l8 5M804 293l2-2M799 267l6 7 1 1M804 254l2 0M768 178l-8-5-6-3-6-6M768 178l1-7 2-7 2-4 3-8M776 152l-6-3M770 149l-5 1-8 3-4 2-7 3M748 164l-2-6M768 179l0-1M735 186l3-5 3-6 5-4 2-7M777 152l-1 0M766 133l1 8 3 8M742 154l4 4M543 158l8-2 6-4M543 158l1 7 0 6M557 152l4 8 3 5 3 6M544 171l6 3 5 5M567 171l-6 3-6 5M572 172l-5-1M571 143l-10 4M561 147l-4 5M565 199l-6-2-5-3M554 194l2-6-1-9M561 147l-4-6-6-6-3-5M529 151l0-6 0-7M529 151l7 4 7 3M529 138l7-3 5-2 7-3M539 102l-1 4M563 118l-6 2-7 3M538 106l4 6 5 4 3 7M550 123l-2 7M427 257l0 1 1 0M427 257l0-10-32 0M428 258l0 22-13 0M415 280l-5-1-6-3-8 2-5-2-6-2M395 247l-10 0 0 27M447 264l0-6-19 0M467 244l-7-6-4-3-5-6-7-5M430 238l4-5 6-5 4-4M430 238l-3 0 0 19M419 294l-2-6-2-8M407 314l-10 0M380 278l0-4 5 0M394 244l-8-2-6-4-7-3M394 244l1 0 0 3M505 290l9 3 8 2M518 272l0 2-5 0M518 272l4 3 7 4 4 4M533 283l0 12-11 0M502 309l5 1 6 5 7 1M520 316l0 0 0 0M520 316l5 0 0-9M525 307l0-12-3 0M441 193l6 1 9-1 6 1 8 0M441 193l0 8 1 6-1 7M441 214l3 5M444 219l8-4 7-1 6-3M470 194l-2 9-3 8M479 227l-6-7-3-4-5-5M444 224l0-5M404 224l-5-6-6-6M404 224l7-2M411 222l6-9M417 213l-1-8-2-9M393 212l1-5 2-8 2-5M398 194l11-1M414 196l-5-3M394 244l2-6 6-8 2-6M372 228l5-8 4-6M381 214l12-2M430 238l-5-4-5-3-5-4-4-5M441 214l-5 0-6 0-6 0-7-1M439 191l-7 2-5 1-7 0-6 2M439 191l2 2M413 174l-1 5-1 6-2 8M439 191l0-5M760 363l-1-9-3-6M760 363l-6 6M754 369l0 0M754 369l-6-3-7-3M741 363l2-9 1-6M744 348l6-1 6 1M760 363l7-1 7-1M780 344l-5-2-8 0-5-1M781 344l-1 8M774 361l6-9M762 341l-6 7M754 369l-3 6-2 4-4 6M745 385l-9-4-6-3M741 363l-5 1M730 378l4-7 2-7M511 242l0 16 13 0M511 242l5-1 7-5 7-3 7-3M537 230l2 6 5 5M544 241l-4 4-5 7-5 6M524 258l0 0 6 0M509 242l2 0 0 0M518 272l3-6 3-8M545 270l-15 0 0-12M545 270l-4 8-6 5M535 283l-2 0M599 251l3 5 2 7M599 251l4-5 3-7M606 239l8-1 6 0M605 264l6-2 5-5 8-1 5-5M605 264l-1-1M620 238l5 6 5 6M630 250l-1 1M580 240l3 5 5 4M588 249l11 2M594 221l4 6 5 7 3 5M625 215l-2 7-1 8-2 8M635 248l-5 2M472 193l1-4M472 193l5 4 2 3 5 5 5 4M473 189l7-2 7 0 7-1 7 0M489 209l6-4 7-7M502 198l-1-12M472 183l1 6M470 194l2-1M489 215l0-6M507 222l5-6 6-5M518 211l-5-5-7-3-4-5M520 158l9-7M520 158l-1 4M544 171l-5 5-5 4-5 5M529 185l-3-7-2-5-2-4-3-7M520 158l-7-4-7-1-8-4M489 163l4 5 4 3 5 6M519 162l-7 6-6 4-4 5M501 186l1-1M502 177l0 8M547 197l-6-3-6-4-6-2M547 197l-2 6-2 10-2 6M520 210l1-4 2-6 3-6 3-6M520 210l5 5 7 4 5 3M529 188l0 0M541 219l-4 3M554 194l-7 3M529 185l0 3M563 220l-8 0-7 0-7-1M518 211l2-1M502 185l6 0 7 2 6 0 8 1M537 230l0-8M564 235l-7 4-5 2-7 0M545 241l-1 0M351 339l0 13 12 0M385 323l0 0 0 24M363 352l22 0 0-5M339 372l0-5 19 0M363 352l0 15-5 0M422 355l-33 0 0-4M389 351l-4 0 0-4M457 390l-6 0 0 12M457 390l0-25-15 0M427 409l0-2-4 0M426 362l0 21-11 0M423 407l-8 0 0-24M405 441l0-15-8 0M423 407l0 19-26 0M356 414l-3 0 0-13M356 414l6 1 6 4 8 2 7 0 5 3M353 401l7-4 4-5 6-5 6-4M388 424l0-1 1 0M389 423l-4 0 0-38M376 383l0 0 7 0M383 383l2 2M343 430l13 0 0-16M338 390l15 0 0 11M370 449l18 0 0-25M358 367l0 16 18 0M397 426l-8 0 0-3M415 383l0 2-30 0M389 351l0 32-6 0M223 288l0 18-3 0M223 288l23 0 0-8M246 280l0 12 10 0M256 292l0 25 0 0M256 317l0 3-25 0M231 320l0-14-11 0M211 277l0 11 12 0M192 317l28 0 0-11M241 244l12 0 0 18M241 244l-25 0 0 9M253 262l-4 6 0 6-3 6M253 262l20 0 0-3M291 292l0 0-35 0M258 319l-2-2M227 344l0-24 4 0M497 146l6-7 4-8M529 138l-4-5M507 131l6 0 7 1 5 1M538 106l-5 5-7 4M526 115l-1 8 2 5-2 5M486 101l-2 8-1 6-1 8M486 101l5-2 7 0 7 1M482 123l8 0 5-3 7 0M502 120l3-5 3-7M505 100l3 8M476 93l10 8M479 126l3-3M507 97l-2 3M507 131l-5-11M526 115l-5-3-6-1-7-3M365 178l0 9-1 8M365 178l4-3M369 175l6 1 7 0 7 1M364 195l6 2M370 197l5-1 6-2 7-3 5-1M389 177l1 8 3 5M345 169l7 3 5 1 8 5M355 201l9-6M372 159l-1 8-2 8M395 166l-4 5-2 6M381 214l-4-5-4-7-3-5M398 194l-5-4M117 327l0-2-2 0M139 293l-23 0 0 4M115 325l1 0 0-28M105 280l0 0 0 7M105 280l0-17 24 0M116 297l-6-4-5-6M91 170l0 26 4 0M120 200l-8 0-6 0-8-1M95 196l3 3M284 232l-7-3-6-2-5-4-5-2-7-2M290 199l-6 0-8 0-5 1-7 0-5 0M259 200l-1 5-1 8-3 6M241 244l0-7 1-9M242 228l6-3 6-6M194 235l6-4 6-7 5-4 4-6M242 228l-7-2-4-3-5-3-7-4-4-2M181 194l7 3 6 2 7 4 7 3 6 2M215 214l-1-6M23 168l8 0 0-1M23 168l0 11-9 0M31 167l5 4 5 4 6 5 4 4M14 179l5 0 0 24M29 204l-10-1M29 204l6-5 5-3 4-5 7-5M51 186l0 0 0-2M19 203l0 0 0 0M6 144l0 24 17 0M43 146l-12 0 0 21M6 179l8 0M71 163l0 21-20 0M6 203l4 1 9-1M95 196l-30 0 0 6M65 202l0-16-14 0M6 229l7 0M13 229l6 0 0-26M377 23l-9 3M358 6l1 3 2 8 3 6M368 26l-4-3M213 15l-8 3M228 53l-7 3-7 2M205 18l-3 5-3 5-5 6M214 58l-4-6-5-3-2-6-5-4-4-5M220 92l-6-5-3-4-6-3M214 58l-2 6-4 6-2 4-1 6M199 127l8-3 6 1 8-3M187 120l1-5 2-7 1-8 0-6 2-6 0-6M221 122l4-7M205 80l-12 2M96 11l5 3 8 4 6 1 5 4M120 23l5-6M124 6l0 6 1 5M80 23l4 6 3 8 5 6M120 23l0 9M120 32l-7 2-5 2-5 2-6 2-5 3M75 55l7-3 7-2M95 87l4-5 3-5 2-6M104 71l-3-6-4-4-4-5-4-6M89 50l3-7M252 143l-6-1-7-2-7 0M252 143l2 6 1 5 1 8 0 6 2 5M232 140l-3 6-3 6-3 6-3 5-2 7M258 173l-7 9M251 182l-7-1-5 1-6-3-8 1M218 170l5 5 2 5M221 122l3 6 5 5 3 7M268 130l-4 5-7 3-5 5M287 166l-6 2-7 1-9 1-7 3M205 167l7 2 6 1M259 200l-3-5-3-8-2-5M214 208l2-6 4-6 0-5 4-6 1-5M746 389l7 1 9 0 6 3M746 389l-1 7-4 5M768 393l-5 6-5 5-3 7M755 411l-7-6-7-4M758 443l-7-3-8-5M748 460l-5-3-5-4-7-4M731 449l6-5 2-5 4-4M764 422l-8-5M764 422l0 5 0 6 1 7M756 417l-9 3-6 6M743 435l-2-9M756 417l-1-6M741 401l-9 3M728 420l8 2 5 4M728 420l-1-3M732 404l-4 6-1 7M679 488l0-8M653 490l5-8 5-7M653 490l6 3 4 3 5 4M679 480l-8-2-8-3M531 508l0-2 7 0M521 495l11 0 0-9M538 506l1-6 3-5 2-7M532 486l12 2M733 806l0-4 0-6 2-7M735 789l-6-2-6-3-8-3-5-4M710 777l-1 2M736 753l-6 2-7 5-5 3-7 4M754 779l-5 3-7 3-7 4M711 767l-1 10M711 767l-5-7-6-7M700 753l-9 0-6-2-4 0M766 800l-6 5 0 1M766 800l4 2 8 3 3 1M760 782l3 5 0 7 3 6M762 591l-4 6-1 8M734 600l5 6 4 5M743 611l8-3 6-3M777 611l-6 2-5 4M757 605l6 5 3 7M768 629l-3-7M766 617l-1 5M729 626l5-4 4-6 5-4M729 626l1 6 4 7M734 639l11-1M745 638l3-8 3-7M751 623l-5-6-3-5M715 618l0-3M715 618l8 5 6 3M743 611l0 1M759 647l-8-5-6-4M765 622l-6 1-8 0M503 673l6 6M509 679l0 8-2 5-1 6M525 713l0-1M506 698l6 6 6 3 7 5M426 594l0 3-10 0M416 597l0 14-3 0M439 631l0-1-14 0M413 611l12 0 0 19M416 647l0-3-4 0M425 630l-13 0 0 14M337 616l-13 0 0 21M337 616l-32 0 0-14M324 637l0-3-24 0M305 602l0 32-5 0M304 601l1 0 0 1M339 615l-2 0 0 1M339 615l0-24 12 0M351 591l-16 0 0-17M331 661l1-4M295 638l0-4 5 0M332 657l0-20-8 0M200 658l-4 6-5 3-6 6M164 642l0 25 0 0M185 673l-7-2-7-3-7-1M206 692l-3-1-7-2M185 673l1 6M127 647l4 6 5 4 2 5 5 4 3 5 4 6M164 667l-7 6-7 4M186 692l-1 2-5 6-4 4M176 704l6 4 3 3M198 749l-2-8M196 741l1-2M134 435l15 0 0 8M134 435l8 0 0-28M149 443l25 0 0-17M174 426l0-16-4 0M170 410l-12 0 0-9M142 407l0-6 16 0M158 383l-1 6 0 5 1 7M195 392l-25 0 0 18M118 392l24 0 0 15M114 393l-4 0 0 11M134 435l-13 0 0 2M110 404l2 6 1 8 3 7 3 6 2 6M239 444l-7 1-8 0-6 2M225 477l0-10-11 0M214 467l2-7 1-6 1-7M212 416l0 12-6 0M218 447l-5-5-2-7-5-7M174 426l7 3 6 4M206 428l0 5-19 0M171 587l6-6 4-6M155 584l0-19-10 0M181 575l0-27-12 0M169 548l0 0-2 0M145 565l0-17 22 0M102 743l7 4 2 3M102 743l-2-7 0-9M100 727l6-4 3-5 6-4M133 741l1-6 0-8 1-9M135 718l-7-2-6 0-7-2M97 745l5-2M80 713l8 5 6 4 6 5M80 713l-5 2M75 715l-4 7-2 5 0 0M84 635l37 0 0 6M84 635l0-7M123 626l0-23-18 0M84 628l5-6 3-5 5-5 3-5 5-4M124 646l-3 6-5 5-4 5-2 5-3 5-5 7M102 679l0 0M84 635l-6 6M78 641l0 8M78 649l6 4 2 5 5 6 3 5 4 5 4 5M80 713l4-7 1-7 4-5 2-8M102 679l8 6M110 685l2 8 2 5-1 8 2 8M91 686l6-3 5-4M78 649l-4 4-5 5-5 4-5 6-4 5M91 686l-5 0-7-2-6-1-7-2-5-2-6-1M55 678l0-5M78 641l-6-1-7-2-7-2-5-1-7-1M84 628l-3-5-5-5-4-6-4-5M68 607l-8 3-7 1M46 634l2-7 3-9 2-7M557 539l1-5 2-8 1-5M557 539l-8-1-8-3-7-2M534 533l0-1M534 532l3-3 5-5 6-4 3-5M561 521l-7-6M554 515l-3 0M529 541l0-8 5 0M560 546l-3-7M525 518l0 14 9 0M538 506l7 4 6 5M578 545l1-6 3-6M561 521l12-1M582 533l-4-7-5-6M655 604l3 7 1 7 3 8M642 634l1 0M643 634l7-2 5-3 7-3M670 677l-6-4-6-6M670 677l-1 6-3 7-1 7-1 6M655 667l3 0M655 667l-8 4-5 2-8 2M634 675l-1 7-1 6M651 708l1 0 5-3 7-2M612 658l6 5 5 3 6 6 5 3M643 634l3 8 2 5 1 6 5 7 1 7M673 739l1-3 5-6 2-7 5-6M686 717l-7-2-3-5-7-4-5-3M763 667l-6 1-6 1-5 1-7 0-6 1M734 639l-4 6-6 7M724 652l4 7 2 5 3 7M707 629l5-5 3-6M707 629l2 8 1 6 0 6M724 652l-8-1-6-2M599 551l0 7 0 9M599 551l7-6M606 545l9 3M615 548l2 9 3 7M599 567l5-1 8 1 5 0M617 567l3-3M580 549l7 0 5 1 7 1M595 572l4-5M601 530l1 7 4 8M601 530l-1-1M582 533l5-3 6-1 7 0M601 530l8-2 4-4 9-2M626 541l-1-6-3-7 0-6M626 541l-4 4-7 3M636 565l-7-1-9 0M633 543l-7-2M618 585l0-5 0-7-1-6M600 529l-3-7 0-7M597 515l-9-6M573 520l6-9M579 511l9-2M571 241l-2 8-4 7M545 241l4 9 5 6M565 256l-11 0M545 270l0 0M554 256l-4 9-5 5M542 293l-4 11M542 293l9 0 8 1M560 295l-1-1M560 295l-3 8-2 7M538 304l8 9M555 310l-9 3M535 283l7 0 0 10M525 307l7-2 6-1M687 230l4 8 5 5M718 235l0-1M718 235l-6 5-7 5M705 245l-9-2M718 235l2 5 3 6 2 7 2 5M707 262l-2-9 0-8M707 262l5 4M712 266l7-3 8-5M746 245l-3 4-4 5-4 7M727 258l8 3M83 353l0-6-3-7M115 325l-27 0 0-1M80 340l5-7 3-9M13 229l6 6 5 7M29 204l0 22 17 0M46 226l-6 4-6 3-5 6-5 3M6 258l4-2 7-1 7-4M6 287l5 1 6 3M17 291l5-5 5-3 7-5M34 278l-1-7-1-5 0-7M32 259l-8-8M24 251l0-9M96 240l-4-8M96 240l-3 6-3 5-2 7M92 232l0-8-32 0M88 258l-10 4-7 2M71 264l-6-6-7-5M58 253l0-6 0-7-1-7-1-6M60 224l-4 3M116 240l0 0-20 0M98 199l0 33-6 0M105 280l-17 0 0-22M65 202l0 22-5 0M46 226l10 1M32 259l5-2 8-1 6-3 7 0M312 6l-1 4M284 19l7 3M311 10l-7 4-7 5-6 3M281 54l4-7 6-5 5-5M296 37l-3-7-2-8M340 8l-2 10M364 23l-7 0-4 2-7 0M338 18l8 7M311 10l5 5 4 2 4 5M338 18l-6 1-8 3M386 50l-6 0-7-2-6-2M373 71l-8-3M365 68l1-7-1-9 2-6M368 26l-1 8-2 9M367 46l-2-3M160 15l7-5 5-4 1 0M160 15l-3-3M157 12l-3-5 0-1M205 18l-4-5-4-3-5-4M162 19l-2-4M162 19l6 4 6 3 8 2 6 4 6 2M194 34l0 0M125 17l7 0 5-1 7-1 7-2 6-1M120 32l4 5 2 5M104 71l9-3 8-2M126 42l0 8-3 9-2 7M162 19l-1 7-3 6-4 7-1 6M126 42l6 1 9-1 6 1 6 2M128 107l2-7 0-6 3-6-1-6 2-6M134 76l-7-4-6-6M701 486l-5-6-4-8M679 480l9-8M692 472l-4 0M663 475l-2-5M661 470l1-6 2-6M664 458l9 0 7 0M688 472l-5-7-3-7M728 420l-4 5-4 7M703 410l5 3 9-1 5 2 5 3M703 410l0 7 1 6 0 6M720 432l-8-1-8-2M684 448l6 0 9 0M684 448l-4-6M700 432l-2 8 1 8M700 432l-8-1-5-2M680 442l4-5 3-8M664 458l-3-8-5-5M656 445l9-8M684 448l-4 10M680 442l-8-2-7-3M703 410l-1-1M702 409l-7 4-7 2-6 5M704 429l-4 3M687 429l-5-9M653 490l-7 2M661 470l-10 0-8-2M646 492l-8-7M643 468l-2 8-3 9M525 473l0-7 10 0M525 473l-13 0 0-3M512 470l-2-2M510 468l0-20 17 0M535 466l-1 0 0-14M534 452l-7 0 0-4M544 470l0 8 2 9M544 470l0-4-9 0M532 486l-7 0 0-13M544 488l2-1M513 494l0-24-1 0M507 467l0 1 3 0M497 446l3 0 0-6M527 448l-1-3M526 445l-26 0 0-5M627 444l-7 1M627 444l6 6 6 7M620 445l-5 8-2 8M639 457l0 2M639 459l-7 2-8 5-7 2M613 461l4 7M654 444l-3 5-6 5-6 3M654 444l-3-5-4-5-6-4M641 430l-4 1M637 431l-6 7-4 6M656 445l-2-1M643 468l-4-9M617 470l5 6 6 3 5 5M617 470l0-2M638 485l-5-1M606 485l-5-6-4-2-6-5M606 485l3-6 5-4 3-5M597 457l-2 8-4 7M597 457l7 2 9 2M791 430l-2-6M806 408l-1-1-8 0M797 407l-3 5-1 5-4 7M764 422l9-4M773 418l8 4 8 2M509 679l5-2 7 1 7-2 6-1M525 712l6-2 8-4 7-2M546 704l-4-5 0-5-2-7-3-6-3-6M571 656l-2 5 0 8M535 647l-1 6 0 8 1 6-1 8M569 669l-7 2-7 0-7 2-8 1-6 1M534 675l0 0M388 635l0-9-2 0M388 635l0 13M354 628l-1 0 0 21M354 628l27 0 0-6M381 622l0 4 5 0M353 649l18 0 0 3M413 611l0 15-27 0M412 644l-24 0 0-9M339 615l0 13 15 0M332 657l21 0 0-8M351 591l13 0 0-1M377 601l-13 0 0-11M377 601l2 7 0 7 2 7M416 597l-11 0 0-9M377 601l28 0 0-13M400 567l-7 0 0-23M400 567l0 0-1 0M399 567l-25 0 0 5M393 544l0-4-20 0M374 572l-11 0 0-20M373 540l-4 7-6 5M423 559l0 8-23 0M406 527l-3 7-6 5-4 5M405 588l-2-6-2-8-2-7M364 590l10 0 0-18M365 515l0 25 8 0M341 554l8-2 6 1 8-1M207 575l-2-2M207 575l0 0 29 0M205 573l0-28 2 0M241 559l-5 0 0 16M241 559l-2-4-3-7-4-3-4-6M228 539l-21 0 0 6M208 602l0-27-1 0M181 575l0-2 24 0M247 590l-5-4-2-6-4-5M169 548l0-16 17 0M192 533l-6 0 0-1M192 533l0 12 15 0M266 551l0 8-25 0M234 528l0 11-6 0M216 506l-5 0 0 1M211 507l0 26-19 0M139 716l2-6 0-8 3-9 0-6M139 716l7 1 7 3 9 3M162 723l4-6 6-7 3-5M175 705l-6-5-5-4-6-2-5-4-6-5M147 685l-3 2M110 685l7 0 6 2 8 0 7-1 6 1M135 718l4-2M161 745l-1 0-3 6M162 727l0-4M157 751l-6-2-6-3-7-2-4-2M196 741l-5 2-3-1M176 704l-1 1M150 677l-3 8M157 751l0 6M75 715l-7-4-7-2-5-3-7-5M47 705l2-4M55 678l-4 6-3 6M49 701l-1-11M55 673l-6-7-3-6-6-4M46 634l-5 3M40 656l1-7 1-5-1-7M53 611l-4-3-6-7-4-3-4-5M41 637l-7-4-7-2M27 631l0-6-3-7 0-5 0-6-2-7M35 593l-7 4-6 3M6 605l2-2 5-5M13 598l-5-7-2-2M6 639l1-1 7-4 6-1 7-2M22 600l-9-2M6 559l5 6M11 565l-4 6-1 6M665 627l6 7 6 5M665 627l4-6 5-5 5-3 3-7M691 627l-2-8 0-8M691 627l-5 6-6 6M680 639l-3 0M682 606l7 5M662 626l3 1M658 667l4-4 3-6 3-6 5-5 4-7M681 604l1 2M708 608l-7 1-6 2-6 0M707 629l-8-1-8-1M710 649l-6 3-6 3M698 655l-6-6-6-3-6-7M670 677l7 1 7-2 7 1M698 655l-3 8 0 6-4 8M700 686l6 0 7-2 6 0 6 0M700 686l0 7-4 8 1 7-2 6M695 714l5 4 8 3 5 4M731 696l-3 4 0 8-2 5-4 6-1 6M731 696l-3-7-3-5M713 725l8 0M733 671l-4 8-4 5M691 677l4 4 5 5M686 717l9-3M700 753l3-5 3-6 2-5 3-5 2-7M755 703l-5-2-7-2-7-1-5-2M734 733l-8-5-5-3M647 534l-1-6-3-6M622 522l1-4M623 518l6 3 9-1 5 2M671 513l-8 0-6 0-8 0M643 522l6-9M646 492l-2 9M649 513l-3-7-2-5M562 281l8 0 9 2M562 281l-1-2M561 279l3-4 4-6 3-6M579 283l3-7 1-6M583 270l-5-6M578 264l-7-1M583 290l-1 6-2 6M583 290l-4-7M560 295l7 4 4 1 8 3M559 294l2-6 1-7M579 303l1-1M545 270l5 4 6 1 5 4M565 256l6 7M598 286l-8 1-7 3M598 286l1-9-2-6M597 271l-7 0-7-1M597 271l7-8M588 249l-3 5-5 4-2 6M483 326l9 0 0 11M520 316l0 16-5 0M515 332l0 5-23 0M459 354l0 13 26 0M485 367l0-18 8 0M492 337l1 0 0 12M457 390l22 0 0-4M485 367l0 1 0 0M485 368l0 18-6 0M486 417l-20 0 0 9M486 417l0-21 0 0M479 386l0 10 7 0M555 310l7 4 5 6M579 303l-2 7-4 8M567 320l6-2M687 264l-5-6M687 264l1 6 0 8M680 257l2 1M680 257l-6 2-6 5-5 2M663 266l2 10M665 276l7 2 5 5M688 278l-11 5M707 262l-6 1-8 0-6 1M696 243l-6 5-3 4-5 6M669 236l3 7 3 7 5 7M651 254l4 9M655 263l8 3M744 348l-7-9M736 364l-5-4-7-4M724 356l1-6 2-7M737 339l-10 4M772 321l-7 0-6 0M777 302l-7-1-6 2-6 0M758 303l-2 7 0 6M759 321l-3-5M762 341l-2-7-4-5M759 321l-3 8M737 339l1-3M756 329l-6 3-5 1-7 3M761 261l-7 6-7 4M735 261l5 10M747 271l-7 0M767 282l-7 3M747 271l5 6 4 4 4 4M758 303l-4-6M760 285l-4 6-2 6M658 391l-3-5-3-6-4-6M658 391l7-2 7-3M657 366l-5 4-4 4M657 366l6 4 6 3 7 4M672 386l4-9M105 287l-6 4-5 4-6 1-5 4M88 324l-5-6-2-7M83 300l-2 11M71 264l-1 6-3 6-3 5M83 300l-4-4-4-5-5-6-6-4M34 278l6 4 7 0 5 4M52 286l6-3 6-2M45 341l9-6M45 341l-11-1M54 335l0-7 2-8 1-6M34 340l-2-7-3-4-4-5-3-7M23 313l6-3 8 0 7-2 5-1M23 313l-1 4M49 307l8 7M60 368l-4-1M56 367l-3-5-3-7-3-8-2-6M80 340l-7-1-5 0-7-4-7 0M36 378l7-4 6-3 7-4M14 361l6-4 4-8 6-5 4-4M81 311l-7 1-6 0-4 2-7 0M6 322l4-2 6 0 6-3M17 291l1 7 4 9 1 6M52 286l-1 8 0 6-2 7M374 99l-8-2-6-4-6-4M365 68l-7 1-5 3M353 72l0 7 1 10M326 111l2-6 2-6 4-4M349 109l-3-6 0-7M334 95l12 1M346 96l8-7M175 56l4 5 1 6 3 6 3 6M175 56l-9-1-8-2M158 53l-3 7-5 7-2 7M148 74l5 6 6 5 4 4M163 89l6-3 5-3 6 0 6-4M194 34l-4 6-5 6-5 6-5 4M193 82l-7-3M153 45l5 8M134 76l7-1 7-1M159 101l3-6 1-6M724 449l-1-1M724 449l0 7 0 7 2 6 0 8M723 448l-5 1-7 2-6 3M723 479l3-2M723 479l-5-3-6-5-4-3-5-4M703 464l2-10M731 449l-7 0M720 432l1 9 2 7M732 476l-6 1M699 448l6 6M721 484l2-5M692 472l6-3 5-5M676 405l-8 1-6 0M676 405l2 7 3 7M681 419l-7 3-7 3M662 406l-1 6 0 7M661 419l6 6M654 399l4-8M654 399l8 7M679 400l-3-8-4-6M679 400l-3 5M665 437l0-6 2-6M682 420l-1-1M644 422l-3 8M644 422l9-2 8-1M644 422l-2-6M654 399l-3 1M642 416l3-7 2-4 4-5M648 374l-9 0M639 374l-1 8 0 5-1 7M651 400l-7-2-7-4M637 431l-5-3-6-3-7-2M620 445l-5-7M619 423l-3 6-1 9M642 416l-5-5-6-1-8-4M623 406l-2 8-3 6M619 423l-1-3M579 485l-2 6-5 7M579 485l-1-3M578 482l-7-1-8-2M572 498l-5-1-8 1M563 479l-6 4-4 5M559 498l-6-10M593 494l-7-5-7-4M593 494l-2 8-3 7M579 511l-3-7-4-6M606 485l-1 4M605 489l-5 2-7 3M591 472l-9 4M582 476l-4 6M554 515l1-6 4-6 0-5M546 487l7 1M618 420l-9-1-6 1M603 420l-2 5-3 6M615 438l-12 0M598 431l5 7M597 457l-2-3M603 438l-5 9-3 7M574 462l-7 0-7 0M574 462l4-7 6-5M584 450l-2-4M582 446l-10-2-7 0M565 444l-5 6-3 7M557 457l1 4M558 461l2 1M582 476l-4-8-4-6M563 479l-3-8 0-9M595 454l-11-4M584 431l-1 9-1 6M584 431l7 0 7 0M544 470l6-6 8-3M534 452l11 0 0-3M545 449l7 3 5 5M797 407l-6-7M773 418l1-7 2-6 1-8M791 400l-6-1-8-2M754 369l5 6 3 4 4 5 5 4M774 361l4 7 1 9M779 377l-5 6-3 5M768 393l3-2M777 397l-6-6M745 385l1 4M771 388l0 3M546 704l4 3M550 707l1 4M214 467l-6 1-9 3M211 507l0-12-17 0M194 495l0-24 5 0M152 454l0-11-3 0M152 454l20 0 0 14M187 433l0 30-3 0M172 468l0-5 12 0M184 463l0 8 15 0M6 702l2-1M8 701l3-6 3-6 5-6M6 663l0 0M19 683l-4-7-1-8M6 663l8 5M10 704l-2-3M48 690l-6-3-8-2-8 1-7-3M6 661l0 2M40 656l-6 3-6 3-7 2-7 4M97 566l0 27 1 0M97 566l7-1 4-5 8 0 6-3M126 561l-3 0 0-4M126 561l0 29-1 0M125 590l-20 0 0 10M123 557l0 0-1 0M105 600l-7-7M60 573l3 5 5 5 1 6 4 5M60 573l6-2 6-2 6-3 5-3 6-1M73 594l7 1 6-2 6-1 6 1M89 562l8 4M145 565l-19 0 0-4M167 548l0-18-23 0M144 530l-21 0 0 27M138 596l-13 0 0-6M105 603l0-3M144 530l0-8-2 0M142 522l-22 0 0-8M120 514l-11 0 0 20M109 534l0 23 13 0M68 607l2-8 3-5M28 562l6 4 5 5 3 5M28 562l1-7 1-8M30 547l4-4 5-4 7-3M58 572l-8 1-8 3M58 572l2-5-1-7-2-7 2-6M59 547l-7-4-6-7M35 593l1-7 4-4 2-6M11 565l8 0 9-3M6 539l3 0 5-5M14 534l5 4 6 3 5 6M60 573l-2-1M89 562l-1-7-2-6-2-7-1-8M83 534l-6 3-8 4-3 3-7 3M623 515l2-7M623 515l-9-3-7-4M625 508l-2-7-2-6M607 508l0-9-1-8M606 491l7 3 8 1M623 518l0-3M644 501l-5 2-8 3-6 2M597 515l10-7M633 484l-7 5-5 6M605 489l1 2M526 445l4 0 0-17M545 449l1-6 1-7M530 428l0 8 17 0M562 436l-8-4M562 436l3 8M547 436l7-4M712 266l0 12M688 278l4 4M712 278l-7 1-6 1-7 2M740 271l-6 10M754 297l-7-1M734 281l5 4 5 5 3 6M712 278l5 5M717 283l8 2M734 281l-9 4M756 316l-6-1-7 0-7 1M738 336l-2-8-3-7M736 316l-3 5M747 296l-6 6-7 5M736 316l-2-9M725 285l1 9 2 9M734 307l-6-4M605 264l4 5 7 5M629 251l1 7 0 6 1 9M616 274l6 0 9-1M598 286l4 3M602 289l11-3M616 274l-3 12M580 302l6 4 7 0 8 4M602 289l0 6 0 6 1 6M601 310l2-3M613 286l6 5 7 5M626 296l-3 7M603 307l6 0 8-3 6-1M665 276l-5 4-4 7M677 283l-1 8-3 9M656 287l4 5 4 7M673 300l-9-1M296 37l11 6M324 22l-1 6-1 8M307 43l8-5 7-2M637 394l-6 3-6 3M623 406l0-2M625 400l-2 4M806 381l-6 1M800 382l-7-6M793 376l1-7 0-7M794 362l8-2 4-2M791 400l4-7 2-5 3-6M779 377l8 0 6-1M780 352l6 5 8 5M578 686l-6 8-1 4M578 686l6 1 2 0M569 669l3 6 4 5 2 6M550 707l6-3 6 0 1-1M612 658l-5 6-3 6-3 4M175 514l4 0 0-14M175 514l0 1-26 0M179 500l0-15-12 0M167 485l-19 0 0 6M148 491l1 0 0 24M186 532l0-18-11 0M194 495l0 5-15 0M142 522l7-7M172 468l0 17-5 0M152 454l-4 6-4 4-4 7-4 4-4 5M132 480l16 0 0 11M120 514l0-13-8 0M132 480l0 0-5 0M127 480l-15 0 0 21M121 437l0 1-2 0M119 438l-2 0 0 30M127 480l-6-5-4-7M6 453l1 2 2 6 1 5 3 7 2 5M15 478l-4 6-4 5-1 1M14 534l1-6-1-7 1-5M15 516l-7-4-2-1M515 332l0 8 7 0M493 349l28 0 0 7M522 340l-1 0 0 16M485 368l21 0 0 6M486 396l24 0 0-1M506 374l4 0 0 21M717 283l-4 5-3 5-3 6M728 303l-5 3-7 2M707 299l4 3 5 6M733 321l-8 1-5 2-7-1M716 308l-2 7-1 8M713 336l7 3 7 4M713 336l-1-6 1-6M713 324l0-1M649 286l-4 6-5 4M649 286l-3-7-3-4M643 275l-12-2M631 273l-1 7-2 8 0 7M640 296l-5 1-7-2M655 263l-6 6-6 6M656 287l-7-1M631 273l0 0M626 296l2-1M617 340l2-11M617 340l-8 2-6 0-8 1M619 329l-6-4-5-2-7-4M595 343l2-8 0-6 2-8M599 321l2-2M601 310l0 9M630 322l-3-7-1-7-3-5M630 322l-7 4-4 3M580 325l-7-7M580 325l7-2 6 0 6-2M630 322l3 1M620 345l7 3 6 4M620 345l-3-5M633 352l9-6M642 346l-1-5-3-7-2-5-3-6M664 299l-8 8M640 296l7 10M647 306l9 1M633 323l5-2M647 306l-5 8-4 7M639 374l-3-2M625 400l0-8-4-9M636 372l-6 5-4 3-5 3M730 378l-11 5M732 404l-5-5-4-5-4-4M719 383l0 7M702 409l-1-7M719 390l-7 5-5 3-6 4M679 400l8-2 8-1M701 402l-6-5M676 377l4-2M695 397l-1-8-2-7M680 375l5 4 7 3M719 383l-5-5-4-6M692 382l7-3 4-3 7-4M365 43l-6 3-7 1-8 0M353 72l-1 0M352 72l-2-6-2-6-2-6-2-7M346 25l-3 8-1 6-2 6M344 47l-4-2M322 36l7 5 8 5M340 45l-3 1M45 428l-1 6 0 8 0 6-1 7M45 428l-7-3-7-1-8-2M43 455l-7-2-6-1-5-2-8-1-5-3M23 422l-3 6-3 7-2 6-3 5M19 412l4 10M6 449l6-3M73 391l-2 6M110 404l-26 0 0 13M84 417l-3-7-6-6-4-7M40 396l5 4 8 3M45 428l5-4M50 424l2-6 0-7 1-8M71 397l-6 3-6 0-6 3M46 536l0-5 0-7 0-6M15 516l6-1 6-2 8-3M46 518l-4-5-7-3M15 478l8 0 8 2 7 1M35 510l2-6 0-9 0-6 1-8M44 457l0 5 0 8 0 6M44 457l-1-2M38 481l6-5M520 316l21 0 0 10M522 340l0-6 16 0M538 334l3 0 0-8M546 313l-3 8-1 5M541 326l1 0M567 320l-3 4-5 6M542 326l6 2 4 1 7 1M580 325l1 5-1 7M593 345l-3 0M593 345l2-2M580 337l4 4 6 4M603 420l-8-9M623 404l-7-2-7-3M609 399l-8 5-6 7M521 356l0 0 0 0M506 374l11 0 0-5M521 356l0 13-4 0M692 282l1 7 2 8M707 299l-8 1M695 297l4 3M673 300l3 3M695 297l-6 3-7 0-6 3M713 324l-9-3-7-2M699 300l-2 7-1 6 1 6M656 307l3 7 1 8M638 321l7 3 9 2M660 322l-6 4M642 346l11 0M654 326l0 6-2 8 1 6M620 345l-6 5-3 8M593 345l5 7 2 6M600 358l11 0M633 352l1 6-2 8M632 366l-7 1-9-1M611 358l5 8M636 372l-4-6M621 383l-6-2-6-2M616 366l-3 6-4 7M724 356l-10 4M713 336l-4 5-4 3M714 360l-3-5-3-6-3-5M710 372l0-3M714 360l-4 9M680 375l1-3M681 372l6-7 7-4M710 369l-9-4-7-4M338 73l-4-6-7-6M338 73l-6 8-3 5M319 85l-4-5-5-5-3-5M319 85l10 1M327 61l-7 3-9 0M307 70l4-6M352 72l-6 1-8 0M337 46l-3 4-3 6-4 5M334 95l-5-9M306 107l4-5 2-5 4-6 3-6M287 77l8-3 5 0 7-4M307 43l1 7 3 8 0 6M84 459l-6-3-5-4-4-4M84 459l4-6 2-5 6-3 3-6M69 448l0-7 0-10M99 439l-3-4-5-5-5-5-3-5M83 420l-4 2-5 5-5 4M85 468l-1-9M85 468l-6 2-4 2-7 4-5 3-7 1M44 457l7-3 6-1 5-1 7-4M56 480l-6-1-6-3M119 438l-5 1-7 0-8 0M117 468l-31 0 0 1M86 469l-1-1M50 424l5 2 7 2 7 3M84 417l-1 3M67 500l-4 7-4 7M67 500l8 0 9-1 7-1M59 514l5 3 4 4 6 4 5 5 4 3M94 500l-3-2M94 500l-1 6-4 7-1 7-3 5-1 7M84 532l-1 1M56 480l5 6 2 8 4 6M46 518l7-1 6-3M86 469l3 6 0 8 1 8 1 7M83 534l0-1M112 501l-5-1-8 2-5-2M109 534l-25 0 0-2M544 353l1-5M544 353l8 4 7 6M545 348l7-2 5-2 5-4M559 363l9-4M568 359l-1-8-2-9M562 340l3 2M538 334l4 6 3 8M537 358l0-2-16 0M537 358l7-5M559 330l3 10M580 337l-9 2-6 3M590 345l-5 5-5 7-6 5M574 362l-6-3M584 431l-4-5M595 411l-7-1M588 410l-3 6-1 4-4 6M562 436l5-5 7-5M580 426l-6 0M486 417l13 0 0 8M500 440l0-12M499 425l0 3 1 0M530 428l0-1M500 428l30 0 0-1M554 432l-1-9 0-6M553 417l-8 2-5 2-9 0M530 427l0-6 1 0M510 395l2 2M517 369l0 14 12 0M529 383l-5 5-6 3-6 6M499 425l17 0 0-20M531 421l-3-10M528 411l0-6-12 0M512 397l4 0 0 8M657 366l2-11M681 372l-3-8-2-8M676 356l-8 1-9-2M653 346l3 2M659 355l-3-7M676 303l1 7M660 322l5 0M677 310l-6 7-6 5M537 358l3 9 1 7M529 383l0 0 3 0M541 374l-6 4-3 5M559 363l-2 5-4 7M541 374l7 2 5-1M528 411l0-14 13 0M532 383l5 7 4 7M672 337l7 4 4 6M672 337l1-4M673 333l5-4 7-3 5-4M683 347l9 0M690 322l0 0M690 322l1 9 3 6 0 8M694 345l-2 2M676 356l7-9M656 348l5-4 5-3 6-4M665 322l5 5 3 6M677 310l8 8 5 4M694 361l-1-7-1-7M697 319l-7 3M705 344l-11 1M579 371l0 2M579 371l8-3 9-2M579 373l4 5 5 5 4 5M596 366l6 7 4 7M592 388l10-2M602 386l4-6M600 358l-4 8M574 362l5 9M609 379l-3 1M609 399l-3-7-4-6M588 410l-5-8M583 402l5-7 4-7M551 398l6-5 4-5M551 398l3 7 2 8M556 413l7 1M563 414l5-5 6-2 5-6M579 401l-4-4-4-6-6-4M565 387l-4 1M553 375l3 6 5 7M541 397l10 1M553 417l3-4M574 426l-7-6-4-6M583 402l-4-1M579 373l-4 4-4 5-6 5"/>
<g fill="#00466c" stroke="#000" stroke-width="1.35" stroke-linejoin="round">
<path d="M6.2 705.2l4.9-1.8 4.9-1.9 3.1-3 5.5 0.6 5-0.6 0.6 3.7-3.7 1.8 0 4.3 5.5-0.6 8.6-1.2 5-0.6 1.8-1.3 1.2 1.9-3 1.2 0 6.8-1.9 1.8 6.8-0.6 1.2 4.9 1.2 3.7-1.8 1.9 4.3-1.3 4.3-1.2 1.9 2.5 5.5 1.8 3.7-1.2 1.9 3.7 2.4 3.7 1.9 4.3 1.8 3.1 4.9 3.7 2.5-3.1 4.9-0.6 4.9 1.2 2.5 3.7 4.9 2.5 2.5 3.7 0.5 2.5-1-3.9 5.4-1.7 4 0.5 0.9-6.2 4.5 3.7 5.9-5.7 6.9-1 3.9 6.7 4.7 3.7 5.7 0 0.9 5.4 11.4 0 1.7-4.9 3.7-3.5-4.9-3.9-6.2-7.9-3.2-7.4-1.5-4.9 3-4.4 4.9 3.9 4.2 3 8.1 1.9 6.7 4.2 6.1 5.7 6.2 4.2 7.4 4.9 9.8 5.7 8.6 3.4 8.7 3.2 6.1 3.7 3.7 14.8 3.7 27.6 0 6-236.4 0 0-106.8z"/>
<path d="M241.6 813.1l-7.4-54.1-4.9-8.7-2.5-7.4-6.1 1.3-6.2-2.5-8.6-2.4-8.6 0-6.2-3.7-6.1-5 1.2-3.7 3.7-2.4-3.7-3.7-4.9-2.5 0-2.4 4.9-6.2 4.9-7.4 6.2-2.4 4.9-2.5 4.9-7.4-2.9-4.7 0-7.4-2.5 2.4-2.4 1.9-2.5 2.4-0.6 4.3-1.3 3.1-3 2.5-3.7-0.6-2.5-2.5-0.6-3.1-3.1 0.6-3.1-1.2-2.1-3.1-0.3-1.8 1.2-2.5 3.1-1 3.7 0.8 2.4-1.6 3.7-4.3 3.1-3.7 1.9-2.5 3.7-1.2 4.9 0.6 3.7-3.7 3.7-3.7 2.4-2.5-1.2-3 0-3.1 2.5-1.2 3.7 0.6 1.8 1.2-1.2 3.1 3.1-0.6 6.1-2.5 7.4-2.5 3.7-1.8 1.2-1.8 9.9 0 1.2 1.8 4.9 2.5 3.7 1.8 3.7-0.4 5.5 0.4 9.8 1.3 5-2.5 4.9-2.5 4.9 3.7 6.2 2.5 3.7 1.2 2.4 5 2.5 3.7 3.7-1.3 6.1-0.7 7.4-0.5 8.7-1.2 8.6-1.3 9.8-2.4 9.9-3.2 9.8-3 9.9-2.5 9.8-1.2 9.9-0.7 9.8 0.7 9.9 1.2 9.8 1.3 9.9 2.4 9.8 3.2 9.9 4.2 7.4 3.7 7.3 4.9 7.4 5 7.4 6.1 7.4 6.2 4.9 5.4 2 5.7 1 6.1 2.4 6.2 4 4.4 5.4-1.5 1.9 0.3 7.4 2.4 4.9 3.7 2.5 1.8 4.9-3 6.2-2.9 7.4-4.5 6.1-3.7 5-3.7 4.9-3.7 4.9-3.7 3.7-3.6 3.7-1.3 3.7 2.5 1.7-3.7-2.9-3.7-3.7-0.5 3.7-4.4 3.6-3.7 5-1.7 4.9-1.5 4.9 1.9 4.9-0.9 5 0.5 3.7 4.1 4.9 3.7 6.1 3 5 3.2 4.9 4.9 2.4 3 3 3 1.5 4.5 3.7 3 5.2 3 3 3 0.8 5.9-0.8 4.5 2.3 4.5 3.7 3 4.5 3 4.5 3 2.2 4.4 2.3 4.5 2.9 1.5 2.3 4.5 1.5 4.5 2.2 2.2 3-1.5 4.5-0.4 6 0.4 2.9 0.8 0.8 3.7 1.5 3.8 2.2 2.9 0 4.5 2.3 4.5 2.2 3 3.7 2.2 0 5.3-2.2 3.7 0 15.7 0 5z"/>
</g>
<g fill="#00466c" stroke="#000" stroke-width="1" stroke-linejoin="round">
<path d="M306.9 631.1l3.7-6.1 2.5-2.5 3.7 1.2 3.7 2.5 0.7 7.4-0.7 7.4 2.4 6.1 3.7 1.2 1.3 3.7 3.7 3.7 2.9 2.5-1.7 2-6.2 1-7.4 0.4-6.1 0.8-3.7 1.5-2.5-3.2-2.4-5 1.9-7.4 0.5-9.8z"/>
<path d="M343.9 658.2l0-4.9 3.7 1.2 3.7-2.5 3.7 1.3 2.4-5 2.5-3.6 2.4-2.5 1.8 2.5-1.8 3.6-2.4 3.7-3.7 3.7-4.9 2z"/>
<path d="M368.5 652l3.7-3.7 2.5-3.6 2.4-6.2-1.7-5.4 2.9-1.5 2.5 5.7 2.5 2.4 2.4-4.9 2-3.7 2.5 1.2-0.8 5 2.5 3.7 6.1 2.4-2.4 2-7.4 1-4.9 1.5-6.2 2.4-4.9 2.5z"/>
<path d="M417.7 643.4l3.7-2.4 6.2 0.5 2.5-3.5 2.4 3 7.4 0.5 7.4-2.5 3.7 1.5 3.2 2.4 1 4.2-3 1.7-6.1-1.7-6.2-0.7-7.4 1.5-7.4 0-4.9-1.5z"/>
<path d="M474.4 655.7l4.9 2.5 3.7-2 3.7-1.7 4.9 1.2 3.7-3.7 2.5 1.8-2.5 4.4-3.7 2.5-3.7 1.2-2.4 3.7 2.4 3.7 3.7 2.4 4.9 2.5 6.2 3.7 4.9 2.5-1.2 2.4-4.9-1.2-5-2.5-4.9-2.4-4.9-3.7-3.7-5-2.5-4.9-3.7-2.4z"/>
<path d="M507.6 693.9l3.2 3.7 3.5 4.9 1.5 6.2-2.5 3.2-3.5-4.5-1.9-6.1z"/>
<path d="M521.9 711.4l7.3-2 6.2-1.2 4.9-2.5 2.5-2.4 3.7-2.5 2.4 2.5-1.2 3.7 6.2-2.5 7.4-3.7 7.3-3.7 7.4-4.9 5-2.5-2 2.5-9.1 6.4-9.9 6.6-6.1 3.7-7.4 4.5-6.2 2.9-4.9 3-2.5-1.8-4.9-3.6z"/>
</g>
<path fill="#00466c" stroke="#000" stroke-width="1" d="M802.1 560l-1.5 6 3 6-2.3 5.9 3 7.5-2.2 9 3 10.4-2.3 12 1.5 10.4-2.2 10.5 2.2 8.9-0.7 9 2.2 3 4.5 0 0-98.6z"/>
<path fill="none" stroke="#000" stroke-width="1.2" stroke-linejoin="round" d="M799.1 577l1.4 1.5 3.2-0.2 1.8-1.3 0 1.2M802 562.8l0.8 1.3 1.2-1.2 0.7 2.1M801.3 631l1.8 1.9 2.1 0.8 0.3 1.9 0 1M800.5 569.8l1.9 0.2 1.5 0M791.3 579.1l0.8-1.3 2.4 1.3M802.2 623.4l3.3-1.8 0 0.3 0-0.7 0 0.2M802.3 589l1.6 2 1.6-1.9 0 0.9 0 0M797.5 607.8l2 0.3 1.4 2 0.9 0.7 2.3 1.4M800 592.8l1.2-1.4 3.1-1.4 1.2-1.4M797.1 564.9l3.2-0.3 3.2 1.9 2 1.6 0-0.5M801.4 584.8l2.1-0.3 1.7 1M794.3 566.9l2.4-1.9 1.3-0.5 2.9 0.6M792.7 575.2l1.9-1 3.1 0.1 2.6-2 1.2 1.5M801.4 636.3l2.7 0 1.4-0.1 0 0.3 0 1M792.4 597.5l0.6 0.4 2.4 1.4 2.1-1 1.7 1.9M792.5 646.7l1.6-1.3 2.4 1.2M792.3 568.3l0.9 0.1 1.5 0 1.2-1.4M795.4 578.8l2.6 1.1 2.2 0 2.6-1.9 2.7-0.4M795.6 642.9l1.1 0.8 1.3 0.9 1.4-2 1.7-0.8M794.4 646.3l2.8-0.1 2.1 0.2 0.8 0.4 1.4 0.1M798.3 588.9l1.2 0.5 1.4-1.2 0.8 0.6 1.7 1.6M798.4 622.8l1.9 1.9 2.5 0.9 1.8 0M791.7 643.9l0.8-0.3 1.2 0.9M799.5 638.4l2.8-0.4 1.5-1.1 1.7 0.6M792.9 565l2.6 1.7 2.7 0.5 2.6 0.7M799.2 642.3l1.3 0 2-0.9 1.6 0.1 1.4 1.8M793.3 576.7l2.5-1.7 1.1 0.1 2.3-0.5M802.6 631.4l2.5-1.2 0.4 0.6M794 625.6l1.5-1 2.8-1.4M793.3 625.6l2.4 0.9 1-0.4 1.7-0.2 2.4 0.7M798.3 624.3l1.1 2 0.7 1.3M799.3 649.5l0.8 0.3 1.7-0.2M802.7 603.8l1 2 1.1-0.6 0.6-1.3 0.1 1.7M800.9 602.2l1.1-0.4 2.1-1.2 1.4 1.4M801.4 648.6l2.4-1.8 1.7 1.4M798.7 654.6l0.8 1.3 2.2 0.5M800.4 605.8l1.1-1.4 1.3 0.6 0.6 1.3M793.1 624.4l2.4-1.3 1.4-1.9M796.8 565l2.7-0.4 0.7-1.1 1.6-1.1 1.1-1.3M795.9 651.3l2.9-1.2 0.7-0.6 2 0.5M799.4 577.9l1.8 1.5 1.8-2 1.4-1.9M798.6 625.6l2.1 1.7 3.2-0.5 1.6 1.9 0-2.1M798.2 594.6l0.7-0.5 2.6-1.3 3.2 0 0.8-1.2M794.3 609.9l2.6 1.6 1.6-1.7 1.6-1.4M800.6 612.3l2.2 2.1 2.7 1.9 0 2M799.7 631.1l3.1 0.1 2.7 0.1M793.8 573.1l2.2-0.2 1.9-1.3 1.2-1.3M793.5 639.3l1.3 0.2 1.9-2 2.8 0.4M799.7 637l1.2-1.4 1-1.9 2.6 1.5 1 1.4M796.7 604.6l2.1 1.1 2.4-2 3-1.5 1.3-0.6M796.2 614.4l2.5 1.6 2.6-0.6 1.3 1.2 2.7 1.8M801 580.2l2.6-1 1 1M792.1 649.5l1.4-1.2 1.2 0 2.5-1.2 2.4-0.7M795.3 622.6l2.8-0.9 1.3 1.4M799.9 567.2l2.4-2 2.5 0.4 0.7 0 0-0.6M798.5 621.4l1-0.4 1.8 0.6 2.5 0.3M793.7 602.8l3 1.5 2.7 1.6 2.6-0.6 1-2M799.2 587l1.1-1.9 1.1-1.4 2.3 1.4M792.2 582.3l2.3 0.5 1-1.5 2.5-1.3 0.6 1.2M797.7 582.2l1.1 0.3 2.8 0.1"/>
<path fill="none" stroke="#000" stroke-width="3" stroke-linejoin="round" d="M783.4 655.6l3.7 6-2.2 6 3 5.9-2.2 6 0 0.5 3.7 4.5 4.5 3-1.5 5.9 3 9-6 6 0.7 7.5-5.2 5.2-0.3 9.7"/>
<path fill="none" stroke="#00466c" stroke-width="1.6" stroke-linejoin="round" d="M783.4 655.6l3.7 6-2.2 6 3 5.9-2.2 6 0 0.5 3.7 4.5 4.5 3-1.5 5.9 3 9-6 6 0.7 7.5-5.2 5.2-0.3 9.7"/>
<g fill="#5c4f4a" stroke="#000" stroke-width="1" stroke-linejoin="round">
<path d="M15.4 719.4l4.3-2.5 4.9-1.2 5 1.9 4.9 3 4.9 1.3-2.5 3-2.4 3.7-3.7 1.3-3.7-2.5-4.9-2.5-5-2.4z"/>
<path d="M65.3 742.8l3.7-2.5 4.3-1.2 3 4.9 3.7 5 1.3 3.7-2.5-0.7-4.9-1.2-4.9-2.5z"/>
</g>
<g fill="#00466c">
<path d="M204.2 676.6l3.7 2.5 6.1-1.2 5-5 4.9-1.2 4.3 1.2 0.6 5-2.5 4.9 1.3 4.9-3.7 6.2-1.2 6.1-4.5 2.3-7.4 7.4-6.1 4.9-1.9 6.2-0.6 4.9-2.5 6.2-6.1 2.4-7.4-7.4 3.7-2.4-3.7-3.7-4.9-2.5 0-2.4 4.9-6.2 4.9-7.4 6.2-2.4 4.9-2.5 4.9-7.4 0.8-1.1-3.7-3.6z"/>
</g>
<path fill="none" stroke="#000" stroke-width="1.7" stroke-linejoin="round" stroke-linecap="round" d="M202.8 706.7l-0.2 1.2-1 1.1-0.1 0.4-1.1-0.2-1.2 0.1 1.3 0.5 M209.6 696.5l0.5 0.4-1.2-1.7 0.1-1.5-1-0.8-1.6-0.2-0.2 1.2 M206 711.8l-1.7-1.4 0.5-0.3 0.2 1.4-1.4-0.8 0.8 0-1.6 0.2 M191.4 729.7l-0.1 1.7-0.3-1.5 0.4 1 M197.1 732.1l-1.2 0.7-1.7-0.2-0.1 0.7 M209.9 707.8l1.7-1-0.9 1-0.5-0.7 M209 686.9l-0.5 0.4-1.2 0.3 1.1-1.2-0.4 0.4-0.6-0.9 0.3 0.8-1.1 0.4 M199.7 701.9l-0.2-1.3-1.6 1.5-0.9 0.7 M193.5 723.3l0 0 1.4 1.7-1.2-0.1 0.5 0.4-1.5-1 1.5 0.8-1.5-0.3 M194.7 704.9l-1.4-1.2-0.2-0.6 0.8 0.1 1.5 0.3 M203 700.7l-1.4 0.8-1.6 0.4 0-1 0.6 0 0.4 1.5-0.8-1.7-0.7 0.6 M196.8 713.4l0.5 1 0.9-1-1-1 1.4-0.9 M223.8 674.2l1.6-0.7-1.2-0.2-0.7-1 M201 710.9l0.5 0.7 1.2 0.4-0.6 1.1-0.8 0.4 0.7-0.7-0.5 0.5 M208.1 711.8l-0.2-1.6 1.2-0.9-1.3-1.5 0.5-0.2 0.4 0.5 1.1 1.6 M213.8 684.2l-0.8 0.7 0.9 0.1-1.6-0.9 0.9 0.1 1.5 0 1.7-1.1 M223.4 672.1l0.3 1.3 1 1.5-0.1 0.5-1 0.8 1 0.5 0.8-1 1.3 1.6 M218.9 691.8l-0.6-1.5-0.2 0.2 1 0 M218.7 680.5l1.7 1.4 0.1 0.6-0.2 1.3 0.3 0.6 M217.3 699.2l-0.7 0.8 0.5 0.1 1.1 0.2-0.6-0.4 1.2 1.3-1 1.2 1.6 0.1 M208.5 684.3l-1.3-1.7-0.4 0.1-1.6 1.4 0.2 1.7-1.3-1.4-1.1 1.5-0.2 1.4 M219.3 697l-0.1-1.3-0.2 1.1 1.4-0.1-0.7-1 M187.4 720.5l-1.5-1.2-1.7-0.7 0.8-0.9 M205 703l-1.3 0-0.8-1 0.1-0.2-0.5-0.3 0.1-1.2-1 0.5 0.5 0.1 M222 686.3l1.4-0.7-0.7 1.5-0.9 1.7 1.3-1.3-0.9 0.8 M220.8 698.1l-1 0.4 1-1.3 0.3-0.5 1.1-0.5 M194.7 713.8l-1.4 1.6-0.2 0.9-0.6-0.2 0.1-0.2 0.3-1.6 0.7 1.1-1.1-0.1 M216.4 697.1l0.4-1.4 1-0.6-1.4 1.2 1.2 1.3 M190.4 708.3l1-0.8 1.4 0.8 0.9 1.1-0.3 1.3 1.3 0.7 M200.6 716.9l1-0.6-1.4 1.3 1.7 1.4 M205.7 702.8l0.7 0.9 1.7-1.6 0.4 0.8-0.9-0.3 M193.2 728.4l0.2-0.3 0 1.2-1.3-0.2 0.5 0.2 0.5 1.5-0.4 1.5-0.3 1.6 M209.6 698.6l-0.2 0.1 0.3-0.5-0.7 0.6 0.2-0.8 0.7-0.7-1.6-0.8 M217.1 696.1l0.9-1.5 1.7 1.5-1.5 1.4-0.2-0.1 1.6-0.9 M215.6 701l0.4-1.3 0.4-0.1-1-1.6 0.1-1.2 M202.3 713.5l0.4 0.5 0.6-0.5 0.8 1.1-1.2-0.7-1.3-0.1 0-0.6 M194.4 709.9l0.6-1.1-0.7-0.9 1.5 0 0.5-1 0.7 0.4-1.7-0.8-1.6-1.5 M204.8 680l1-0.1 1.1 1.1 0.9-0.2 M216.8 696.1l-0.4 0.5 1.6-0.5 0.2 0.8 1.4-0.3 M222.9 676.6l-0.3 0.2 1.1-0.1 1.1-1.6 M196 728.7l-1.4-0.7 0.8 0.7-0.8-1.2-0.4 0.8-0.5-1.3 0.7 0.2 1.4 1.5 M219.4 690.8l-0.9 1.6 0.8 0-1.4 1.1-1.7 0.6 0.3 1 M216.4 694.8l0.1 1.1 0.2-1.1 0.9 1.3-0.7-1.6 0 0.1 0.3 1.6 M218.7 677l-0.7-1.4-0.7-1.6 0.6-1.4 M220.1 698.1l-0.1 1.4-0.5-0.1-0.5 1-0.6-1.2 M183.5 719.1l1.2 1 1.1 1.4 1.6 0.4 0.1 0.7 1-0.2 M195.2 732.4l-0.1 0.8-0.7-1.2 1.4 1.4 M198.4 708.5l0.7 0.4-0.9-1.1-0.8-1.1 0.9-0.7 0.2 1.1-0.1-0.8 1.3 1.4 M197.5 706l0-1-1.5 1.5 1-0.4 M206.4 704l0.9-1.5 1.5 1.3 1.3 1.4-0.2-0.9-0.3 1.3 M201 720l-0.8 1.3 0.1 0.4 1.7-0.7 0.1-1.2 M220.3 676.9l0.4 0.1 1.4 0.6-1.5 0.9 0.2 0-1.6-1.1 M190.5 714.4l-1 0.2 0.1-1.2 1.1-0.7-0.6-1.4-0.7-0.1 0.7-0.5 M213.9 678.3l0.6 0.9 1-1.3-0.2 1.2 0.7-0.1-0.7-1.3 1 1.2 M224.1 681.2l1.5 0.9 1.6 0.8 0.1-1.4-1-0.4-1.3-0.6-0.8-0.1 M211.7 699.7l-1.4-1.2-1.3 0.6 0.7-1.1-0.4 1.1 0.3-1.4-0.9-1.1 M201.6 703.7l0.9 1.1-0.4-0.6-0.3-1.6-0.3 0.7 M197.6 712.4l0.2-1-0.6-0.7-1.4 0.8 M193.4 705.4l0.1-0.5 0-1.2 0.8 1.7 0 0.7 1.1-1 M192.9 707.8l-0.6 1.4-0.4-0.1-1.3 1.6-1.3 1.4 0.2 0.2 M207.9 688.2l0.4-1.2 1.1-0.8 1.3-0.8 0.3 1.1-1.1 0.2 M195.9 713.7l0.4 0.5 0.9-1.2-0.3-1.6 0.1-1.2-0.3-0.6-1.3-0.9 M225.6 675l0.7 1-0.3 0-1.4-0.5 M208.1 697.2l0 1.7 1.1 1.2-0.3-0.3 0.2 1.4 0.1 0.1 M217 690.8l1.3-0.9 1.2-0.9 1.2 1.6 0-1.3 1.3 0.2 0.6 1.4 1.3 1.7 M198.8 705.9l1.1-1 0.8 0.3 1.4-1.4 1-1.3 0.1 1.6-1.7-0.9-0.7-0.6 M220 696.6l0.7-0.9-0.7-0.2-0.6-0.6-1.2 0.9 0.9 1.3 M190.9 725.5l-1 1.1-0.5-0.1-1.1 1.3 M211.3 683.7l0.5-0.7 1.1 1.6-0.7-0.3 M223.1 692.7l-0.3-1.2 1.2-1.2 0.6-0.8 0.8 0-0.7-0.8 1 0.1 M187.6 713.5l1.6-0.2 0.1 0.1-1.5 0.3-0.7-0.8 1-1.4-0.7 0.9 M207.3 683.4l1.7-1.6-0.1 0.8-0.4 1.5 0-1.1 M207.7 712.1l-0.6-0.1-1.6-0.7 1.1 0.5 1.7 0.8 0.1 0.3 M217.9 678.7l-0.9-0.2 1 1 1-0.9-0.1-1 0.3 0-1.6 0.4 M222.8 683l0.3 0.3 1.1 0.1 0.7 1.2-1.6-1.3 M189.8 711.8l1-0.9-1.2-0.7-1.6-0.6 0.4 0.1-0.8 0.3-1.4 1.1-1.1-0.9 M188.9 714.9l1-1.5-0.3-0.4-1 1.6-1.6-0.1 0.9 1.7-1.2-0.2 0.9-1.5 M192.7 727.4l-1.4 0.2-0.1 1.5 1.6 0.6 0.8 1.6 M210.4 690.2l0.2-0.9-0.2 1.5-0.4-0.6 M197.6 715.2l1.4-1.1 1.3 1.5-1-0.4-1.5-0.3-0.9 1 1-0.1-0.3 0.3 M217.4 701.3l1.7 0.6 1.2-1-0.4-1.5 0.6-0.4-0.7-1.7-1.1-0.8 M200 729.5l-0.8-0.5-1.2 1.5-0.5 0.9 0.8 1.4 M223.2 692.1l0.6-0.7 0.4-0.1-1.1 0.1-1.3-1-0.3-0.1 0.7 0.1 0.1-0.6 M206.7 699.8l-0.4 1.3-0.9-0.7-0.5-1-1.6-1.6 M211.2 707.1l0.6-1.4 1.2 0.2-0.5-1.3 0.9-0.5 1-0.8 M219.3 679.2l-1.5-0.4-0.6 0-0.7-1.2-0.4-0.1-1.1 0.6-0.9-1.4 M188.5 708.2l-0.7 1.4 1.4-1.3 1.4 1.4-0.8-0.4 1.2-0.7 0.7 1.3-1.4-1.6 M195.4 722.7l0.5-0.4-0.5 1.4-1.6 0.7-1-1.5 M199.6 722l-0.8 0-0.1-1.6 0.4-0.8-0.8-1 0 1.5 1.7-1.7 0.1 1.2 M217.7 676.6l1.3 0.7 1-0.8-1.4-1.6 1.1-1-0.4-1.2-1-1.2-0.6 0.7 M219.5 690.1l-0.7 0.8 0.1-0.9-0.8-0.6-1.1 0.1-1.3-1.5-1.5-1.3 M214.8 678.8l0 0.6-1.5 0.4-0.3-0.1-0.6-0.3 0.8 0.6-0.8 0.5 M198.8 714.4l-0.6 0.9 1.2 1.1 0.2-0.2 0.7 0.4 M213.1 686.2l1.6-0.1 0.7 1 1.4-0.8-0.8-0.9 M212.9 695.9l-1.5 0.7-1.3-1.5-0.7 0.8 1.6-1.3 M207.1 701.9l-1.5-0.2 1.3 0.5-1 0.8-0.3-1.2 0.3 0.6 M222.5 699.4l0.2 1.3 1.3-0.2-1.2 1.3 M194.1 707.3l0.5-0.8-1 0-0.4-0.8-1.5-1.5 1.3-0.7 M190.9 726l-1.6-0.5 0.2 0.2-1 0.4 1.2-0.9-1.1-0.7-0.8 1.1 M213.4 688.7l0.8-0.7 0.1-1.6-1 1.5 M216.2 696.7l1.1 0.9 1.7-1.4 1.5-0.3 0.7-0.8 1.4-1.7 0.3-0.9-0.4-0.4 M198.6 711.6l-0.6-1.4 0.5 0.3-0.8-1-1.1-1.5-1.2-0.7 M208.8 691.8l1.6-0.9-0.3 0.7-1.1-0.8 0.6 1.5-0.6-1-0.5 1.6 M188.3 711.4l1.4-1.5 0.4-0.5-0.2 0.7-0.2 1.6 1.4-1.3 0.8 0.9 M202 700.9l0-0.4 0.2-1.5 1.4 0.1-0.2-0.8-1.5-1.5-0.6 0.1 M210.9 683.5l1.6-0.3 1.3-1.3 1.7 0-0.9 1.1 0.5 1.5 1.1 1 M215.1 687.4l-0.2 0.1 1.3-1-0.8 0.5-1.4 0.2 1-0.1 M192.8 721.8l0.9 0.1 1.4 1.1-1.2-0.5 M197.7 725.8l-1.3-1-0.4 1.1 0.4 1.4-1.4 1.7-1 0.4 M190.7 713.5l-0.5 1.1 0.7 1.2 1.5 0.5-0.9-1 0.9-1.1 0.2-1.5 M197.6 710.7l-1 1.7 0.7 0.8-0.5-0.7-0.3-1.2 0.4-0.2 M220.3 697.3l-1.3-1.3-1.4 0.1-0.2-0.1-1.3-1.2 1.2 1.5-1.4 0.5 M191.8 711.7l-0.3-0.7-0.2 1.5-0.7 0.7 0.6-0.9-0.3-1.2 M223.8 687.5l-0.7-1.4 1.3 0.9-1.4 0.6-0.1-1 1-1.7-1.6 0.3 M213 681.4l-0.4-0.1-0.7 0.6 0.4 1.6 M200.1 723.6l0.7 1.7-1.5-0.2-0.4 0.6-0.9 1.6-1-0.4-1.2-0.4 0.8-1.4 M189.2 712.3l1 1.4 0.6 1.6-0.1 1.3-0.3-1.2-0.4-0.4 1.1 1.3-1.3-0.3 M218.2 677.6l0.2-1.5-0.9 0.6 0-0.7-0.5-0.8 0.3-0.1 1.7 0.3-1.1-1.4 M187.8 727.9l-1.1 1.6 0-0.3 0.4 1.3 1.6-0.3-1.7-1.2 1.1 0.8 0.8-1.2 M221.6 674.6l-0.7-1 0.1 0.5-0.3 1.4-1 1.7 0.2-1.3 1.7 1.5 M185.9 710.9l0.8-0.9-0.4-0.2-0.1-0.5-0.2-0.1-1.6 1.1 M207.3 696.7l0.6 0.7-1.6-0.4 1.5 0 0.1 0.8 M199 708.8l-1.6 0.4 1.5-0.5 0.4-0.4 M195.6 709.8l-1.5-1-1.3 0.8-0.5 1.2-1 0.4 1 1.5 0.5-0.5-1.4 0.3 M204.6 696.4l0.2 1.5 0.4-1.6 1.5 0.8 M216.3 697.9l-1.1-1.4 0.6-1.3 0.9 0.7 M219.4 699.6l1.1 1.5-0.5 1.1 0.7 0.7 M200.2 715l-1.3 1.2-1.4-0.6-1.2 1.5-1.2-0.7-0.3 1.3 1.4-1 0.7 0 M202 721.7l1-1.3 0.8-1.2 0.3-1-0.5-1.1-0.5 0.3 0-0.4 0.3 1.2 M198.3 708.2l0.7-0.3-1.4 0 0.5-0.5-0.3-1.6 1.4 1-0.8-0.8 M191.4 728.5l0.2 1.7 1.4-0.2 0-0.9 M217.1 678.1l0-1.2 1.7-0.5-1.2 0 0-0.2 1.6-0.5 M227.9 678.6l-1.6 0.1-0.8-0.7-0.9-1.2 0-0.8-0.7-0.7 M188.9 725.5l0.4 0.2 0.8 0.1 0.5 1.4 1-0.8 M198.5 721l0 0.6-0.6-0.9 0.5-0.8 0.8 1.3 M216.6 690.6l-1.4 0.2-1.3 1.7-0.6 1.3 M184.2 713.4l-1.2-0.3-1.2 1.4 1.6 1.6 M202 714.2l0.1-0.5 0-1 0.7-0.3 M204.4 706.6l-1.4 1.4-0.8-1-0.8-1.2 0.2 1.3-1.2-0.3 1 0.4 1 1.7 M217.8 681.5l-1.3-0.7-0.7 1.7-0.3-1.2 M190.2 709.6l0.9 0.5-1.5-0.4 1.6-1-0.4-0.9-0.5-0.9-0.3 1.3-0.9-1.5 M198.9 717l0.6-0.2-0.9 1.3-1.2-1.2-0.8-0.1 1-0.5-0.9 0.5-0.8 0.1 M193.4 726.6l-0.6-1.5 0 0.8-1-1.5-0.9-1.4 M213.8 703.2l-0.9-0.3 1.6-0.4-0.5 1.4 1.7-0.4-1.2 1 0.9-0.6 M218.8 695.5l0.3 1.5-1.5 1.6 1.4-1.5-1.6 1.5-0.3-1.2 M187.8 722l1.5-1-1.3 0.6 1.3 0.7 1.6-0.1-0.5-1.3 M194.3 730.5l1.6 0.7 0.6-1.2-0.6 0.2 M194.3 704.4l-0.2 1-0.8-1.4 0.5-1.6 1.5 1.6 1.4 0.6-1 1.6 0.4-1.4 M209.7 693.6l-0.1-1 1.5 1.6-1.6 0.9-0.4-1.5-1.1-1.1 0.8-1 M212.3 700.8l-0.5-1.1 1.6-0.6 1.2 0.2 0.6-0.8 M216.6 682.1l1.3 0.3-0.3 0.1-0.1-0.5 1.4-1 M223.2 681.9l0.2 1.4 0.9 1.5-0.6 0.2-0.4 0.7-0.5 0.4 0.5-1.7-0.1-1.3 M212.8 696.8l0.2 0.4-0.1-1.3 0-0.1 0.5 1.6-0.8-0.2-1.4 1 M192.4 723.6l-0.8 1.4 0-0.3 0.2 1.5 M204.6 701.9l-0.7 0.5 0.1 1.5 0.5 0.6-0.2-0.6 0.5-1.3 M193 717.4l1.1 1-1.1 1-0.7-0.8 1.4-1.6 0.1-0.6 M213 678.5l1.3-0.6-1.1 0.7 0.9 1.6 0.4-1.3 0.8-1.5 M211.7 702.5l0.7-1.6 1.3 0 1.6-0.9 0.4-1.3-1.2-0.2-0.1 0.6 M218 678.2l1.4 1.4-0.7 1.5 0.4 1.6 0.9-0.6-0.7 0.1 M208.9 686.8l-0.4-0.5 1.6-0.7 1.2 1.2 0.1-1 1.5 1 M224.8 676.6l-0.2 0.7 0.9 0.2 0.5 1.5 1.3-0.9 0.2 1.7 0.1-1.1 M217.7 675.3l-1.1 1.6 1 0.2 1.5-0.7 1-1.6 M218.6 687l0.6 0.4-1.6 0.7-1.2-1.5-0.1-1.6 M204.4 708.5l1.5 0.5-0.6-1.7 1.1 0.8 0.3 0.8 1.3-1 M212.8 684.5l-0.6 0.4-0.4-0.6 1-0.2-0.1 1.3-0.2-0.4 1.4 1.6 M218.6 696.8l0.8-0.7 0.8 1.6 0.5 0.5 M202 712.6l0.3-1.4 0.3 0.8 0.2-0.4 1.2-0.5 M199.3 725.8l1.7-1.1 1.4-1.5 0.3 1.1 1.2-0.3 0.3 0.7 M208.8 687.4l-0.3-1.1-1.6 0.8 0.3 1.1 0-1.6 0.9-0.6 1.5-0.6 1.4 1 M204.8 702.2l0.6-1.4-1.6-0.1 0.2-0.2-1.6-0.7-0.2-1.5-1.7 0.1 M191.6 715.9l-0.5 0.1-1.6-0.4 0.5-1.2-0.6 1.2 M225.6 687.3l-1.6 1.4 0.5-1.6-1.1-1.6-1.5 0.3 M212.9 689.9l-1 0.7 0.7-0.5 1.3-1-0.1-0.6-0.2 1 M208.4 709.8l-1-0.9 0.4-1.2 1.6-0.5-0.2-0.3 1.1 1.4 M213.5 682.4l0.3-0.5 0.9-0.6 1.2-0.1-1.5 0 0.6 1.2 M204.7 705.1l-1.5-1.4-1.7 0.7-1.1-0.8 0.6 0.7-0.6-0.1-0.7 0.2 M196 708.8l-1.1-1.2-1.3 0.6-1.1 0.2 1.3 1.2 1-0.2 M215.4 687l-0.5-0.8-0.2 0.2 1.7 1.1 1.2-0.8-0.7-0.3 0.5-1.6 M203 704.4l1.2 1.1 0.6 0.7 0.9-0.2-0.4 0.2 1.3 1.7 M228.3 676.4l-1.6-1.2-0.4 0.5-1.3 0.2 M209 682.5l0.8-0.8 0 1.4 0.5 1.1 1.7 1.4 0.4-1.6 0.7 1.4 M210 686.9l-0.6 1.6 0.2-1.4 0.5-0.8 1.1 0.8 0.8-1.6 M220.6 683.2l0.4 1.5-1.5 0.2-0.4 1.1 M193.3 716.5l-0.3 0.5-1.6 0.3-0.8-1-1.4-0.9 M214.3 695.5l1.6 0.6 0.5-0.4 0.7 0 M199.5 704.9l-1.3-0.4 0.4 0.2-0.4 1.5 M211.1 699.8l0.7-1.5 1.3-1.5-1.1-0.2 1.2 0.4 0.8 0.9 0.8-1.5 M220.5 680.9l0.4 1.4-0.9 0.5-1.2 0.7-1.2-0.5 M209.4 686.1l-1-1.3-1 0.5-1.1-1.2 0.1-0.4 M188.4 707.3l-1.4-1.7-0.6 1.6-1.6 1.1 1.5-0.3 0.9 1.2-0.7-0.7 0.6-1.2"/>
<path fill="none" stroke="#000" stroke-width="1.2" stroke-linejoin="round" stroke-linecap="round" d="M168.5 750l1 0.5-0.9 1.2 M151.4 724.1l0.9-0.3-1.2 1.1-0.3-0.3-0.3 0.3 M167.6 733.1l-0.6-0.7-0.6 1.3 M173.6 745.5l-0.7-1.4-0.6-0.6 M167.8 734.2l-0.2-0.3 1 0.4 M153.4 728.3l0 0.9 1 1.2 0.7 0.5-0.2 0.1 M173.5 734.2l1 0.9 0.1 0.2 M160.6 749.7l-1.2 0.4 1-0.2-0.5 1.2-0.4 0.5 0.8 1.4 M166.4 731.5l0.3 0.6-1.3-0.2 M168.6 745.9l-0.6 0.5-1.2-0.5-0.3 0 M167.5 737.1l1.3 1.2 1-0.8 M159.5 731.4l0.3-0.4 1.5-0.6-1.4-1.2-0.9 0.7 1-1.4 M159.2 722.3l1.2-0.7-1.2 1.4 M169.1 743.4l1.3 0.3 0.6 0.7-1.1-0.7 1.4-1 M166.4 739.6l0.2-1.3 0.7 1 1-1.3-1.3 0.7 M169.7 749.6l1.1-0.9-0.6-0.2-1.3 1.4 0.8-0.4 0.6-0.2 M167.8 746.6l-1 1.4 1.2 1 M177.3 741.7l0.7 0.4-0.4-0.5-1.3 0.5 M174.6 746l-0.1-1.5 0.4 0.4 1.1 0.4-0.5-1.5 1 0.4 M184.9 744.5l-0.1 1.2-0.3-1.5-0.5-0.4 M160.8 741.1l0.2 0.7 0.7-1.2 M170.6 727.1l-0.5 1.5-0.9 0 M161.9 749.6l-0.5 1.1 0.4 0.6-0.5-0.3 1.2 1.4 M162.3 728l-1.1 0.7 1 1.5 0.8-1 0.2 0.3 M158.4 724.8l-0.5 0.5 1.2 1.5 1.2 1.3-0.8 0.9-1.2 0.3 M179.4 741.5l0.7 1.1-1.1 0 1 1.1 0.5-0.6 M169.7 731.9l0.6-0.4-0.3 1.4 M166.6 735.1l-0.6-0.9-0.2-0.1-0.4 0.3 0-0.7 M154.6 725.7l-0.8-1.1 1.4 1.3 1.3 0.1 M152.7 727.1l1.4-0.8 1-0.8-0.4-0.6 M159.4 731l0.6-0.9-0.9 0-0.7 0.1 M174.6 732.1l1.4-1.4-0.6-1.5 M160 750.1l0.2-0.2-0.3 0.1 0.4-1 M169.9 742.7l-0.5-0.9-0.2-0.1-0.2-1.1 M160.7 744.3l0.8 1.2 1.3-0.7 0.3-1.3 0.6 1.4 M166.7 746.4l1.1-0.1-0.2-1.4 M154.3 715.5l-1.2-1.2-1.2-1.2-0.2 0.5 1 1.2 0.3 1.4 M173.2 735l-0.9-0.2 1 1.3 M166.4 751.1l-0.1-0.9-0.3-1.2 1-0.3 M171.4 742.6l-0.7-0.9 0.7 1-0.9 0.1-0.9 0.2 M161.6 749.4l0.6 0.2 0.1-0.8 M171 731.2l1.3 0.3 0.6 0.6 1-1.5 M179.2 736.7l0-1.1 0 0.1 0.1-0.7-1.2 1.3-0.6-0.7 M136.2 744.4l-0.4-0.2 0.7 0.6-0.9 1.4 1.4 0 M100.8 751.4l0.9-0.2 0.7 0.4 0.4 0.1 M132 750.9l1.1 0.1-1.3-0.1 M134.9 754.3l0-0.5-1 1.2-0.9 0.6-1 0.1 1.5-1.2 M146.9 757.3l-1.2 0.9 1.4 1-0.4-0.6 0.8 0.3 1.5 1 M100.2 750.9l-0.6 1.4 0.3-0.7 0.2 1.1-1.4 0.5 0-0.7 M121 748.3l-0.1 0.4 0.4 1.3-1 0.4 0.6 0.6 M117.3 748.5l0 1.5 0.3 0.4-0.3 1.5-0.3-0.3-1.1 1.3 M120.9 744.8l0.7-1.2 1.5-1.4-1.4 0.9 M123.6 758.4l0.2 1.3 0.6-0.8-0.4-0.1 M105.3 757.6l-0.9-1 0.8-0.1-0.8-1.3 0.3-1.3-0.5-0.3 M111.6 749.4l0-0.9-1.2 0.4-1.2-1.4 M104 750.5l1.2 0.9 0.3-0.5-0.1 1.1 M126.6 744.8l0.6 1 0.9-0.7 0.8-1.2 M108.9 750.9l-1.5-0.4 1.2 0.7 0.6-0.7-1.5 1.4 M137.1 746.5l-0.6 0.1-0.4-0.3 0.8-1.5 0 0-1.1 0.7 M111.9 751.6l0.6 0.1 0.1-0.4 0.6 0 0.4 0.7-0.3 0.3 M103.8 747.1l-0.3 1 0.7-1.1 M126.8 746.1l0.7 0-0.9 0.1 M122.5 748.8l0.8 0.8-0.8 0.1 M138.4 751.7l-0.8 0.8-0.6 0.8-0.1-0.2 M130.5 751.2l-0.2 1 0.1 1.2 1.4 1 0.8 0.5 0.2-0.7 M104.9 752.7l0.4-1-0.2-0.5 1.2-0.9 M127.6 757.1l0.8 1 0.7 1.4 M121.5 748.8l-0.5 1-0.3 0.1 0.1-0.4-1.5-0.7 M122.9 758.1l-1.3 1.5-1.3 0.5 0.9 0.5 M107.4 758l1.3 0.5 1 1-0.9 0-1.3-0.4 M123.8 755.6l0.5 1.3-0.2 0.8 1.5 0.3 0.5 0.3 M123 747.5l0.2 1.1-0.9-0.6 M126.5 751.6l0.5-1.4 1.3-0.1-0.8 0.8 0.3 1.1 M126.5 745.2l-0.8-1.3 0.1-0.3 0.8-0.9-0.3 0.4-0.2 0.6 M118 746.5l0.7 0.7-0.9-0.2-0.3-1.3-1.2-0.6 M107.6 752.7l0.9-0.4 0.6-0.2 1.4 1.1 0.6 1 M143.9 757.7l-1-0.1-1.5 0.2-0.3-0.4 1.4-0.1 0.9-1.4 M103.9 757.8l-0.8 0.3-0.3 1.4-0.1-0.7-0.6 1.4 M125.7 752.9l1 0.4 0.8 1 M134.3 756.1l0.3-0.3-0.8-0.3 M133.4 747.4l0.5 1.3 0 0.1 0.5-1.1 M121 750l-0.4-1.4 0.9-0.3 1-1.2-0.2 0.1 M144.9 757.9l0.1 0.7 0.3-0.1-0.9 0.4-0.2 0.6-1.4-0.7 M105.4 754.6l-0.5-0.8-0.6 0.8-0.5-0.1-0.4 0.6-0.3 0.8 M114.5 759l0.2 0.5-1.2-0.2 M129.3 748.1l-0.1 0.5 1 0-0.8 1 0.6 0.7 M129.9 758.5l0.7 0.9 1.4-0.4-0.3 0.8-1.4-0.1 M122.7 750.9l1 0 0.6-1.2 0.5 1.3 M134.5 749.7l-0.2-0.9-0.9 0.8 M131.1 741.7l0.4-1 1.4-0.9 0-0.1-1-0.7-0.9-1 M114.7 752.5l-0.7 1.3-0.3-0.1 1.3 0.5 M129.4 754.3l1.3-0.7-1.2 0.6-1.3-0.9-0.6-1.4 M136.9 744.2l1.4 0.7 0.2 0.4 M126.5 743.2l-0.8 0.8 1.1-0.3 0.9-0.4 M129.9 755.8l1.4 1.1 0.7-0.4-0.8-0.2-1-0.1 M117.6 755.5l0 1.4-0.1-0.1 0.4 0.8 0.3 1.4-0.7 1.2 M143.6 747.2l-0.6-0.1 1.3 0.4 M145.8 750.4l-1 0.5-0.2-0.9-0.6-0.4 M138.6 750.8l1.4 1.3 0.5 1.3-1.1 1 0.5 1.4 M143 752.2l-0.2-1.3-1.4 0.3 0.3 0.1-1.2 0.2 M131.3 746.4l0.2 0.2-0.7 0 1.5 1.4 M119.9 748.7l0.8-0.8 0.3 0.7 0.9 0.1 1.2 1.4 M140.6 747.4l-0.4-1.1 1.4 1.3 0.5 1.3 0.8 0.1 M142.5 749.8l-0.5-1.4-1.2 1.1-0.6-1.4 1.4-0.4 M140 749.1l-0.6-1.4-0.6 1.4 M134.6 752.2l-0.1-1 0.4 0.8 M125.6 746.2l0 0.8 0.4 0.2 M116.1 748.7l0.7 0.3-0.3-1.1-1.3-0.1-0.2-0.8 M133.2 744.8l-0.5-1 0.6-0.4 0.3 0.9 M115.9 748.5l-1.3 0.3-0.2-0.3-1.1 0.7-0.4-0.6 M127 753.5l0 0.8-0.3 1.2-0.1 0.3 M118.3 748.1l-1.3 1.3-0.8-0.3 M115.8 749.1l0 1.3-0.8 0.4 0.2-1.5 M119.9 751.6l1.1 1 1.1-0.9-0.6 0.3 M134.5 752.1l-0.3 0-0.7-0.6-0.1 0.4 M118.4 746l1.3 0.3-1.4-0.3-0.4-0.6-1.3-0.8-1.5-0.1 M129.9 745.1l1.2 0 0.9-0.4 0.7 0.8-0.4 0.7-0.5-0.9 M127.8 743l-0.8 0 0.9 0.3 M144.7 753.9l0.7 0.6 1.2 0.3 0.5 0.1 0.1 1.3-0.6-0.9 M130.6 746.5l0.4-1.4-0.9 0.3-0.3 0.6-0.1-1.2 M137.1 758.3l0.1-0.1 1-1.1 M135 745.7l-0.8 1 0 1.4 1.2 1.4-1.4-0.4 0.3 0.9 M87.3 745l-1.3-1.3-1.1-1.4 M94.5 749.4l1.2 0.8 1.4-1.2 0.4 0.7 1.4 0.7 M89.9 743.2l-0.6 0.5 0.3-0.4-1.3-0.3 M93.9 744.9l1.5-0.5 0.1 1 M100.9 752.9l-1.1 1.3 0.1 0 0.8 1.3 1.1 0.1 M89 746.1l0.3-1.2-0.5 0.5 M96.5 750.6l0.4 1.4 0.4 1.2 M86.5 751.1l-0.9 0.7 1 1.1-1 0.5-0.8-0.9 M98.1 748.1l-1.2-0.9-0.1-1.1 0.6 1.4 M95.4 748.5l-0.5-0.5-0.9 0.7-0.4-0.8-0.9-0.3 1-0.1 M101.8 748.9l1-0.2-0.8 0.7-0.9-1.2-1.4-1.4 M91.3 747.5l-0.8-0.7-0.9 1 0.6 1.2 M86.6 744.5l0.3-0.4-1 1.2-1.3-1.3 1.3-1 M91 746.6l-1.5 0.2-0.3-1.4 0.4-0.5 M90.4 746.5l-1.2-1.2-0.6 0.8-1.3 1.4 M211 742.1l-0.1 1.1 1.5 0.9 M223 745.9l-1.3 1.2 0.7-1.4 0.3-0.8 1.2 0.7 0.7 0.8 M203.2 741l1.4-1.3 0.2 0.6-0.9-1.4 M229 752.8l0.2 1.3 0.9-1.1-0.2-0.4 0.7-0.5 M193.8 737.6l1.2-1.3-0.8 0.9-0.6-0.5-0.2-0.6 M223 747.3l0.3-1.2-0.3 0.3-0.5 1.1 1.2 1.3 M196.7 741l-1.4-0.4 1.4-0.4 M186.6 733.9l-1.4 0.7-1.3 0.1 M222.4 746.3l1.1-1.5-1.1 0.5 M232.4 756.9l-1.2 0.2-0.5-1.4 0.6 0.3 0.5-1.4 M228.6 752.3l-0.2-1.2-1.2-1.2"/>
<path fill="none" stroke="#6a5a52" stroke-width="1" stroke-linecap="square" d="M225.2 678.4 M186 717.6 M207.8 679.3l0.6-0.3 M226.9 680.7l0-0.7 M201.9 707.9 M196.6 709.7 M194 713.5 M214.3 683.6l-0.5 0.1 M184.4 716.5 M219.4 682.8l0.5 0.7 M216.5 700.7 M226.8 679.6 M213.9 698.1 M207.2 683.9l0.8-0.7 M213.8 706l0.7-0.7 M212.1 701.5 M187.4 709.5l0.7-0.2 M212.2 694.9l0 0.2 M209.9 703.6l-0.7-0.6 M200 729.3l0.7 0.3 M221.9 676.8 M185.1 714.1 M202.4 707.3 M198.8 727.3 M208.2 681.4l-0.1 0.2 M218.4 678.5 M200.4 729.3 M220.1 686.6l-0.4 0.1 M211.9 694.5l-0.7-0.4 M210.1 687.2 M212.1 695.1l0.4-0.6 M207.9 688.5 M221.4 695.9 M225.1 690.7l0.2 0.3 M211.2 705.1l-0.4 0.6 M198.1 701.3 M219.6 690.8l-0.8 0.2 M219.4 692.1 M185.2 718.6 M205.8 699.1l0.8-0.2 M208.6 679.6 M189.7 712.8 M189.8 710.3l0.8 0.1 M213.1 681.6l0.5 0.4 M202.4 722.9 M218.3 678.8 M203.4 707l0.2 0.2 M201.2 702.5l-0.7 0.6 M213 697.6 M207.3 709l-0.8 0.8 M221 695.5 M203.9 713l-0.5 0.4 M218.2 699.1l-0.8 0.4 M213.1 685.8l-0.8-0.3 M187.8 708.7l-0.3-0.5 M217.7 683.4 M221.3 674.5l-0.3-0.1 M219 688.1 M190.8 722.1"/>
<path fill="none" stroke="#000" stroke-width="1.7" stroke-linejoin="round" stroke-linecap="round" d="M228.2 662.5l7.4-1.3-3.1 5-4.3-3.7 M241.1 664.9l4.3-1.2 M247.3 661.9l3.1-0.7 M257.1 661.2l6.2 0.9 9.8 1.6 M276.8 664.3l8.7 1.3 M249.1 678.5l3.1 3.1 1.9 4.9 0.6 7.4-1.3 6.1-2.4 5-3.7 4.9-3.7 4.9-4.9 2.5 M235 724l1.8-1.8 M223.9 730.8l4.9-3.1 M241.7 701.3l1.9-3.7 4.9-5 1.5 2.5 M27.3 734.8l1-1.2 M259.5 661.4l9.9 2.5 M271.9 664.6l11 0.7"/>
<path fill="#000" d="M228.2 662.5l7.4-1.3-3.1 5-4.3-3.7z"/>
<g fill="#2c4a6c" stroke="#2c4a6c" stroke-width="0.6" stroke-linejoin="round">
<path d="M299.5 59.1l5-3 6.1 0.5 3.7 3.7 1.3 6.2 3.6 4.9 3.7 1.2-2.4 3.7 1.2 7.4 2.5 7.4-1.3 4.9-2.4-4.9-3.7-7.4-2.5-7.4-2.4-7.4-3.7-6.1-5 0z"/>
<path d="M368.5 260.2l4.9-2 4.9 3.2 6.2 3.7 6.2 3.7 4.9 6.2-3.7-1.3-6.2-3.7-7.4-3.7-6.1-2.9z"/>
<path d="M439.9 377.1l2.5-6.1 3.7-3.7 2.4-3.7 1.3 3.7-3.7 4.9-2.5 4.9z"/>
<path d="M605.1 308.2l3.7-2.5 3.7-4.9 1.2-7.4-1.2-4.9 2.5-2.5 2.4 5 2.5-3.7 2.4 4.9 5 1.2-3.7 4.9-3.7 2.5-2.5 4.9-3.7 3.7-4.9 3.7-2.5-1.2z"/>
<path d="M425.1 413.2l2.5 3.7 1.2 6.2 2.5 4.9 0 6.2-2.5-1.3-1.7-4.9-2-6.1-1.2-6.2z"/>
<path d="M526.1 501.9l2.5 3.7 1.2 7.4 1.2 7.4 2.5 7.3 3.7-2.4-2.5 6.1-1.2 6.2-3.7-1.2-2.5-6.2-1.2-7.4 0-9.8z"/>
<path d="M540.4 601.6l4.2 6.1 6.1 3.7 4.9-2.5 6.2-1.2 0 3.7-6.2 2.5-3.6 6.1-9.9-2.4-1.2-6.2z"/>
<path d="M121.9 658.9l2.5-4.9 4.9-1.7 4.9 1.7 2 4.9-2 5-3.7 3.7-4.9 0.5-3.7-3z"/>
<path d="M43.1 679.9l3.7 1.2 3.7 4.9-1.3 3.7-3.6-2.4z"/>
<path d="M59.1 684.8l3.7 6.2 2.5 7.3 6.1 5 7.4 1.2 6.2 2.5-1.3 3.7-7.4-2.5-7.4-1.7-6.1-3.2-3.7-7.4-2-6.2z"/>
<path d="M144.1 697.1l3.6-2 4.5 2.5 2.4 5.7-2.4 4.9-4.5 2.5-3.6 3.6-3.7-2.4 0.5-4.9 4.4-2.5 2-3.7z"/>
<path d="M784.2 730.8l3.7 4.5 4.5 4.5 4.5 5.9-1.5 6-4.5 3-3-4.5-2.2-6-1.5-7.4z"/>
<path d="M769.2 791.3l2.3-1.1 3.7-1.1 3.7 0.7 0.8 2.5-10.5 0z"/>
</g>
<g fill="none" stroke="#806a12" stroke-width="1" stroke-linejoin="round" shape-rendering="crispEdges">
<path d="M181 6.2l11.1 13.5 6.1 14.8 2.5 14.7 0 32.1-3.7 17.2-8.6 12.3-2.5 17.2-2.4 9.9-7.4 9.8-3.7 12.4-12.3 22.1-12.4 17.8"/>
<path d="M270 59.1l14.8 1.2 12.3-6.1 9.8-1.3 12.3 7.4 17.3 11.1 17.2 14.8 14.8 12.3 12.3 9.8 12.3 7.4 9.9 7.4 2.4 9.9"/>
<path d="M471.9 6.2l-1.2 18.4-3.7 17.3-9.9 9.8-19.7 7.4-7.3 12.3-7.4 17.2-7.4 14.8-6.2 9.9 1.3 9.8-5 9.9"/>
<path d="M366 135.4l5-14.7 9.8-12.4 14.8-8.6 17.2 1.3 17.3 6.1 6.1 8.6 1.2 14.8-4.9 17.2-4.9 9.9-19.7 6.2-19.7-1.3-14.8-7.4-6.1-9.8-1.3-9.9"/>
<path d="M270 171.1l29.5-6.1 32.1-7.4 19.7-8.6 22.1-3.7 19.7-7.4 12.3-4.9 17.3 0 19.7-1.3 19.7 3.7 19.7 5 17.2-3.7 17.2 0 14.8 8.6 19 7.4"/>
<path d="M405.4 133l-1.2 14.7-3.7 14.8-3.7 19.7 0 17.8"/>
<path d="M405.4 133l9.9 12.3 12.3 12.3 9.8 12.3 7.4 12.3 7.4 7.4 9.9 10.4"/>
<path d="M587.9 6.2l-1.3 16 5 12.3 8.6 7.4 3.7 7.3-1.3 14.8-2.4 14.8 3.7 16-5 7.4-8.6 8.6 6.2 12.3 9.8 9.9 5 11.1 3.7 4.9"/>
<path d="M530 146.5l19.7 12.3 19.7-1.2 12.3 3.7 12.3-2.5 21-9.8 23.3 1.2 19.7-7.4 13.6-9.8 16-7.4 14.8-7.4 17.2-7.4 14.8-9.8 12.3-7.4 19.7-9.9 17.2-4.9 22.2-7.4"/>
<path d="M658 142.8l9.9 8.6 4.9 11.1 9.9 7.4 4.9 12.3 9.8 7.4 17.3 0 24.6-6.1 24.6-3.7 24.7-6.2 17.2 1.2"/>
<path d="M714.7 189.6l7.4 10.4"/>
<path d="M594 158.8l-14.8 18.5-17.2 22.7"/>
<path d="M6.2 256.5l30.7-1.2 24.7-5 24.6-8.6 24.6-7.4 24.6-7.4 17.3-3.7 9.8 3.7"/>
<path d="M152.7 190l-6.2 9.8-1.2 9.9 4.9 12.3 12.3 4.9 2.5-4.9 7.4 0 2.9 4.9-2.9 3.7-7.4 0.8-2.5-4.5"/>
<path d="M163.8 230.6l3.6 21 5 24.6 0 24.6 4.9 32 4.9 24.6 1.3 32.6"/>
<path d="M175.3 226.9l11.8-9.8 17.3-9.9 12.3-7.4 6.2-9.8"/>
<path d="M396.8 190l1.2 24.6-1.2 24.6-2.4 19.7 2.4 19.7-1.2 22.2 3.7 22.2 1.2 14.7 2.5 19.7 1.9 14.8 0.5 17.8"/>
<path d="M404.9 372.2l10.4-9.8 12.3-12.3 14.8-9.9 12.3-9.8 7.4-12.4 7.4-12.3 12.3-17.2 7.4-14.8 7.3-17.2 5-13.6 11.1-7.3"/>
<path d="M452.2 190l12.3 12.3 9.9 14.8 7.4 12.3 9.8 6.2 12.3 2.4 8.7-2.4 13.5-3.7 12.3-7.4 11.6-9.9"/>
<path d="M522.4 238l8.6 11.1 6.2 9.8 1.2 12.4 4.9 14.7 6.7 9.9"/>
<path d="M404.9 372.2l12.8-6.1 19.7-3.7 19.7 2.4 22.2-1.2 19.7-4.9 17.2-3.7 19.7-2.5 14.1-1.2"/>
<path d="M404.9 372.2l-6.9 7.4-9.8 10.4"/>
<path d="M530 246.6l4.9 7.4 4.9 17.3 3.7 17.2 8.7 12.3 4.9 12.3 9.8 9.9 9.9 14.7 6.1 12.4"/>
<path d="M584.2 293.4l-6.2 9.9-4.9 12.3-2.5 9.8 6.2 12.3"/>
<path d="M582.9 350.1l11.1-14.8 14.8-11.1 19.7-8.6 17.2-8.6 17.3-11.1 19.7-11.1 19.7-8.6 17.2-9.9 9.9-11 9.8-2.5 12.3-6.2 14.8-8.6 14.8-6.1 24.6-8.7"/>
<path d="M582.9 350.1l21 2.4 24.6 7.4 24.6 7.4 24.6 3.7 24.7 0 24.6 1.2 24.6 1.3 14.8-6.2 14.8-7.4 12.3-9.8 12.3-12.4"/>
<path d="M582.9 350.1l-16-2.5-17.2 2.5-19.7 3.7"/>
<path d="M582.9 350.1l8.7 12.3 7.3 12.3 5 15.3"/>
<path d="M582.9 350.1l-8.6 12.3-9.8 12.3-7.4 15.3"/>
<path d="M717.1 190l7.4 12.3 9.9 12.3 12.3 2.5 9.8 14.8 5 14.7 4.9 17.3 3.7 14.7"/>
<path d="M739.3 255.3l4.9 8.6 12.3 9.8 14.8 9.9 14.8 9.8 19.7 14.8"/>
<path d="M530 226.9l14.8-7.4 12.3-12.3 12.3-17.2"/>
<path d="M592.9 350.1l-1.3 5-3.7 3.6-5 1.4-5-1.4-3.6-3.6-1.4-5 1.4-5 3.6-3.7 5-1.3 5 1.3 3.7 3.7 1.3 5"/>
<path d="M6.2 460.8l18.4 1.7 24.6 2.5 24.7 4.9 17.2 6.1 7.4-0.5 17.2-1.9 19.7 0 12.3 4.9 5 2.5 19.7-1.3 24.6-3.7 24.6-0.5 24.6-1.2 12.4-0.2 12.3-4.2 9.1-1.3"/>
<path d="M183.5 380l-6.2 19.7-9.9 17.2-6.1 17.3-1.2 17.2-5 14.8-2.4 14.8-9.9 14.7-7.4 17.3-3.7 19.7-1.7 19.7 0 27.6"/>
<path d="M258.6 474.1l-7.4 14.2-7.4 17.3-7.4 12.3 0 9.8-9.9 9.9-9.8 12.3-2.5 17.2 0 12.9"/>
<path d="M405.4 380l-1.2 12.3 3.7 12.3 4.9 12.3 7.4 12.3 4.9 12.4 5 12.3 4.9 9.8 4.9 8.6"/>
<path d="M405.4 380l-12.3 7.4-17.2 7.4-12.3 4.9-17.3 2.5-9.8 9.8-17.3 17.2-12.3 12.4-12.3 14.7-12.3 8.7-12.3 4.9"/>
<path d="M439.9 472.3l19.7 0 19.7-6.1 17.2-9.9 14.8-7.4 9.9-14.7 9.8-14.8 9.9-12.3 9.1-9.9"/>
<path d="M439.9 472.3l-4.9 16-9.9 19.7-12.3 19.7-14.8 17.3-17.2 19.7-19.7 15.3"/>
<path d="M601.4 380l4.9 14.8 7.4 14.7 12.3 11.1 6.2 9.9 0 13.5-2.5 22.2 0 29.5 3.7 24.7 9.9 17.2 4.9 14.8 2.5 14.7 2.4 12.9"/>
<path d="M626 420.6l12.3 8.6 9.9 13.6 14.8 7.4 19.7 8.6 24.6 7.4 24.6 2.4 27.1 3.7 17.2 7.4 22.2 6.2 7.4 7.4"/>
<path d="M530 420.6l12.3-13.5 8.6-12.3 5-14.8"/>
<path d="M805.8 537.6l-3.7 14.8-1.2 14.7"/>
<path d="M270 644.7l14.8-3.7 9.8-3.7 9.9-6.2 2.4-17.2 6.2 7.4 20.9 4.9 19.7 4.9 14.8 7.4 12.3-1.2 12.3-9.9 9.9-6.1 19.7-3 19.7-1.5 14.7 4 19.7-5.7 19.7 2.5 19.7-1.3 14.8 6.2 19 4.9"/>
<path d="M403 540l-9.9 12.3-12.3 12.3-17.2 12.3-19.7 12.3-19.7 9.9-14.8 7.4-2.5 7.4"/>
<path d="M6.2 661.4l8.6-1.2 22.1-8.6 29.6-7.4 17.2 1.2 19.7-3 24.6-1.4 19.7 1.4 19.7 6.7 14.8 4.9 12.3 1.2 14.8-3.6 17.2-5 19.7-3.7 14.8 2 19-2"/>
<path d="M125.6 606l1.2 19.7 2.5 12.3 4.9 9.9 1.2 11-2.4 8.7 1.2 8.6 13.5 4.9 12.4 4.9 12.3-8.6 9.8-12.3 3.7-14.8 3.7-9.8 7.4-14.8 6.2-19.7"/>
<path d="M83.7 645.4l7.4 12.3 12.3 9.9 14.8 4.9 16 3.7"/>
<path d="M6.2 615.8l6.1 12.4 1.2 17.2 1.3 14.8"/>
<path d="M480 614.6l19.7 2.5 14.8-1.7 14.7 6.6 19.7 7.4 19.7 7.4 19.7 3.2 19.7 0.5 19.7 2.4"/>
<path d="M714.7 681l4.2 3.8 4.9 17.2 9.8 14.8 7.4 17.2 6.2 19.7 3.7 19.7 3.7 19.7"/>
<path d="M802.1 560l-6.7 14.9-7.5 12-3.7 11.9 1.5 12 1.4 11.9 1.5 15-2.9 14.9 2.2 12 6 8.9 4.5 7.5"/>
<path d="M640 644.4l13.4 0.8 16.5 5.9 17.9 2.3 14.9 5.2 12 3.7 14.9-2.2 12 3 11.9-3.8 13.5-2.9 18.7-2"/>
<path d="M649 560l4.4 17.9 6 20.9 7.5 18 9 13.4 7.4 9 10.5 6 8.9 13.4 7.5 10.5 4.5 11.9"/>
<path d="M785.7 643.7l-5.3 2.9-2.2 9 1.5 9 8.2 3 4.5-3 0-9-3-9-3.7-2.9"/>
<path d="M130 580l-3 13-1.4 13"/>
<path d="M214.2 580l-6.2 13-4.8 13"/>
</g>
<g fill="none" stroke="#000" stroke-width="1" stroke-linejoin="round" shape-rendering="crispEdges">
<path d="M6.2 105.1l148.9 0 2.5 4.5 3.7 4.9-1.2 6.2-2.5 4.9-3.7 4.9-6.2 7.4-6.1 6.2-3.7 4.9 49.2 0"/>
<path d="M201.9 7.4l2.5 4.9 3.7 6.2 0.7 6.1-3.2 4.9-3.7 3.7 1.3 3.7 4.9 3.7 2.4 7.4 1.3 6.2 3.7 4.9 4.9 1.2 2.5-3.7-3.7-1.2 2.4-2.5 3.7 5 2.5 6.1 3.7-2.4-1.3 9.8-2.4 7.4 2.4 3.7-3.7 2.5-2.4 4.9 1.2 4.9-3.7 3.7-4.9-1.2-3.7-2.5-3.7 6.2-4.8 2.6 0.7 4.4 0.1-0.7-3 2.8-0.1 0.1 0.2 2.8-2 1.6-1.6-0.1-0.4 1.8-0.8 3.7-1.1-0.3-1.8 1.1 0.7 2.5 0.9-0.1 0.7 3.6-1.5-0.8-0.8 2.4-0.9 2.6-1.4-2-0.8 4.5 2.6 0.6 1 1.9-2.1 0.3-3.1-0.1-1.9 1 2.3 2.7 0.8 0.1-1.2 3-0.5 0.2-0.9 2.8-1.5 1.8-0.3 1.1 2.8 2.2-0.6 1.4-2.1 0.2 1.5 4.1 0.4-0.6 2.5 2.4-3.5 0.2-2 0.4 0 2.8-0.6 2.4-0.7-0.9-3.7 1.2 0.5 2.2-1.5 2.3-1.7-0.1-2.9 0.5-1.3 2.4-0.8 0.6-3.2 1.2 0.2 2.4 1.4 0-0.2 4.1-1-0.1 0.3 2.1 0.1 2.6-3 2.1 0.1-0.7-0.4 3.7-0.3 2.5-0.2-0.7-4 1.5 0.5 2.4-0.2 0.1-4.2 1-0.1 1.3-1.3 1.9"/>
<path d="M205.6 105.1l74.4 0"/>
<path d="M221.6 60.3l4.9-4.9 5-7.4 6.1-5.6 6.2-3 7.4 1.2 6.1 2.5 6.2 2.5 3.7 4.9 6.1 2.4 6.7 0"/>
<path d="M270 51.7l6.2 2.5 4.9-3.7 1.2-4.9-3.7-5-2.4-6.1 2.4-6.2 6.2-4.9 9.8-2.5 9.9-2.4 4.9-3.7-1.2-5-3.7-3.6"/>
<path d="M270 105.1l41.4 0 1-7.8-3-8.7 15.3 3 95.5-1 59.1 2.5 70.7 2.2"/>
<path d="M530 94.3l41.9 1.7 64 0.8 66.5-0.8 64-1.2 20.9-0.5 18.5 3.7"/>
<path d="M635.9 96l7.4-4.9 9.8-3.7 12.3-2.4 11.1-2.5 3.7-7.4 7.4-2.5 8.6-3.7 1.2-6.1 7.4-4.9 3.7-8.7 8.6-4.9 12.4-4.9 12.3-4.9 9.8-9.9 9.9-9.8 2.4-2.5"/>
<path d="M749.2 7.4l7.3 3.7 8.7 1.2 1.2 9.9 4.9 4.9 4.9 8.6 7.4 6.2 9.9-1.3 7.4-2.4 4.9-3.7"/>
<path d="M787.3 94.3l-3.7 6.7-1.2 7.3-1.2 9.9-7.4 0-6.2 4.9-3.7 7.4-4.9 7.4-7.4 1.2-7.4-3.7-7.4 2.5-7.3 4.9-5 7.4-6.1 2.5-3.7-7.4-4.9-1.2-6.2 3.6-3.7 6.2-6.1 2.5-1.3 8.6-4.9 4.9-7.4-2.5-6.1 5-6.2 3.7-4.9 4.9-6.2 3.7-6.1 3.7-8.7-1.3-8.6 1.3-7.4 2.4-7.4 3.7-7.3 5"/>
<path d="M163.1 187.6l-0.2 4.2 1.2 0.9-4.5 2.3 0.9-0.6-1.9 4 0.6 0.1-5.1 0.6 1.4-0.4-0.2 2.4 0.1 0.3 1.1 2.9-0.7-0.7 0.9 1.8-0.8 2.9 0.1 0.2-2 2.6-0.4 0 3.9 1.6-0.4-1.7-1.7 4 0.9-1 0.7 4.3-1.7 1.7 0.2 1.9 1.1-0.6 4.4 0.2-0.1 1.3-2.2 0.6-2.5 5.4 1.3-0.8-3.9-0.8-0.1-0.5-2 2.8 0.1-0.4-4 1 1.1 0.6-0.6 4.1-1.3-0.8-4.1-0.8 0.1 2.4 1.8-0.3-0.7 4.7 1 0.2 2.3 1.7-0.1-0.3-0.2 4.6 1.2-0.8-2.6 3.8 1.1 0.1-3.2 0.1-3.5-0.3 0.8-0.8-1.3 1.7-3.2 2.1-0.7 0.6-1.6-3.9 0 0-1.7 0.2 0.2 0.2-4.1 2.8-0.4 0.7 0.9 1 3.3 2.5-1.8 1.5-1.5-1-0.8 3-0.3 1.8-1.9-1.2-0.5 3 2.6 1.8 1.1 1.8-3.9-0.4 0 0.8-0.8 2.5 0.1 0.3-0.2 0.8-0.5 3.5-1.7 0.2 4.7 3.5-0.3-0.9-0.4 2.6-3.3 0.6 1.1 1.6-0.4 3.3-0.8-1.2-0.5 2.6-0.9 0.9 1.1 1.4 0.2 3.2 0.7 0-4.4-0.3-1.1-1.1-0.8 3.7 0.5 1-2.1 0.3-2.8 1 1.2 0.6-1.8 3.2-1.8-0.6-2.6-0.2-0.6 3.6 0.4 1.1-1.5 0.3-3.8-1.2 0.3 0.6-3 3.4 0.1-2.2 0.2 2 1.1 4.5-0.7-0.9 3.2 1.2-0.5 2-3.3-0.5-1.3 0.1-2.7 0.7 4.9 3.5-1.6-0.1-0.9 4 2.2-1.1-1.8 3.5 0.2-0.8-4.1 0.8 1-0.3-0.8 4.3-1.1-1.1-3.6 0.9 0.6-0.3-0.5 2.9-3.5 2-1.4 0.6 3.3 0.1 2.7 0.9 2 0.4-4 1.9 0-0.2-0.7 4.3 0.8-0.2-1.8 0.6-3.3 0.4 0.6 0.8 0.2 2-0.4 0.3 2.9 2.5 0.4-1.1 2.5-0.8 1.5 1.1-3.9 0.4 1 0.6-1.4 4.4 0.2 1.2-3.8-3.4-0.3 1.1-2.4 1.6-1.3-2.1-2.9 0.3 1.1-0.3-1.5 4.7-0.9-2.7-0.1 5.6-0.1-1.5 4.2 2.9 1.1 0.7-5.3 0.6 1.1-0.3-1.2 4.8-1.5-0.7 1.2 4.1-0.6-0.8 4.1 1.2 2 0.8-3.5 2.2-1 1 0 0.6-0.3 0.7 0.8 1.8 2.5 1.9 0.7-0.8 4-1.1 0.5-0.8-0.3 5 2.4 0.5-0.5 2-0.9 0.1-3.8 0.8-1.2-0.1 2 4.2-0.9 0.1-1 2.4"/>
<path d="M145.3 238.5l134.7 0"/>
<path d="M270 238.5l29.5-1 98.5 0.5 73.9 0.8 78.1 0.4"/>
<path d="M299.5 237.5l7.4 10.4 0 3.7-6.1 49.2-4.9 49.3-3.2 39.9"/>
<path d="M492.9 239.2l3.6 22.2 9.9 51.7 7.4 49.3 3.2 27.6"/>
<path d="M530 239.2l57.9 0 70.1-0.4 21-0.8"/>
<path d="M627.3 190l-8.7 3.7-6.1 4.9-2.5 6.2-1.2 6.1-6.2 3.7-7.3 0-5 2.5-1.2 9.8-1.2 12.3"/>
<path d="M679 238l8.6-3.7 14.8-3.7 9.8-3.7 12.3-3.7 7.4-2.4 12.3-0.5 22.2 1.2 24.6 1 14.8 0.7"/>
<path d="M679 238l-2.5 4.9-7.4 6.2-4.9 6.2-3.7 7.3 3.7 5 7.4 4.9 6.1 4.9 6.2 6.2 9.9 0 3.6 6.1 3.7 7.4 3.7 7.4 2.5 8.6 6.2 7.4 4.9 8.6 6.1 5 7.4 4.9 7.4 6.1 4.9 8.7 5 7.3 7.3 3.7 6.2 6.2 3.7 7.4 1.2 6.1 5 5.5"/>
<path d="M81.3 381.9l-0.7-0.8 4.2 0.7 1.5-0.6 0.6 1.8-2.6 2.2 1.4 1.8 0.7 1.3-1.6 2.8-1.1 0 3.9 2.4 1.6 1.4-3.8 0.9-0.2-0.9-2 4.9-0.1-3.5-0.5 5.7-1.2-1.1 4 2.6 0.4 2.1-3.7-1.4 0.6-0.2-3.2 2.5 1.2-0.8-4.6 2.7 0.6-1.4 2.2 3.7-1.7 0.4-0.3 4.2 2.2-0.8 1.9 1.9-2.6 0.8-1.2 0.6 0 1.5 1.3 1.7-1.2 0.4-0.1 4.6 1.3 0 1.8-2 1.5 0.3 1.3 1.9 2.5-2.5 0.7 1-0.5 1-0.7 3.3 1.3-1-1.5 2.2-0.8 3.3-1.2-1.6-3.3 1.6 0.9-0.3 1.5 4.2-0.8-0.8-2.7 3.4 0.1-0.1 3.8 2.5-0.9 0.2-0.3 4.1-0.1 1 2.8-0.3 1.9-0.3 0.4 2.2-0.9 0.8 2.7 1.6 2.9 0.3-0.5 3-2.8 0.5 0 1.5-0.3 3.4-0.8-0.5-2.9 1.9 0 1.9 2.5 0.7 0.1 2 2.3 2.2 0-1.1 2.9-2-0.4 0.5 1.6 0.8 0-0.2 3.2 3.1-0.7 0.1 0.4 3.5-0.7 0.1 4.4-0.7 1.8 0.2-3.4 1.8 0.3 1.2-0.3 3.9-0.1-0.3-4.2 0.8 0.5-0.1-0.8 2.7 1.3-1.1-1.7 4.4-0.5 0-0.7 2.7 1.2-0.4-2.5-3.5-0.1 0.3-3.2 0.4 0-0.1-4-1-0.1 2.1 0.4-0.2-3 2.4-1.9 1.3 0.2 1.9 3.7-1.1-0.6 1.8 2.8 3.3-0.1 0 2.8-3.7-0.6 0.1 2 0.4 0.4-1.2 0.5 4.1-0.7 0.4-2.5 2.3-0.5-0.5 0 2.6-0.2 1.7-1.4-0.1-0.2 3.4-0.6-0.4 1.1 3.9 0.1 0.6-2.4-0.4-2.2-0.7-1 0.7-1 3.7 0.7 0-2.1 1-3.1 0.9 0.6 1.8 0.6 1.6-3.8 1-0.4-0.9-2.3 3.7 0 0.7-2.5 1.2 0.3 1.4 0.8-0.4 3 0.1-1.3 2.1 0.4-0.5-1.1 1.5-1.6 3.5-2.8-0.6-0.4-0.6 1.1 4.5 0.2 1.2-1.2 1.4-2.2 1.4 0.3 0.1-1.1 3.6-1.9 1.6-1-3.4 0.5-0.4-2.3 0-0.2-0.1-0.6 3.5 0.2-0.2 2.5 3 1.8 0.7-4.2 1.4-1.8-0.2 0.1 3.1 0.7 1.5-1.4 0.6-2.7 2.8 0.7-0.2 0.5 3.1-1.7 1-1.8 0.4 1.4 2.5 0.5-0.2 2.7 2.9-0.2-1.5 2.2 4.3 0.3 0.1-0.5 2.4-3.4-1.6 0.4 0.2-4.4 2.3 1.4 0-3.4-1.5"/>
<path d="M6.2 415.7l71.4 0"/>
<path d="M292.7 380l-4.2 36.9-5 49.3-3.2 49.2 0.8 37 1.2 27.6"/>
<path d="M517 380l4.2 24.6 3.7 24.6 3.7 9.9 2.4 7.4 6.2 9.8 2.4 9.9-1.2 8.6 7.4 6.2-4.9 4.9-5 4.9-2.4 7.4-0.5 9.8-2 9.9 3.7 9.8-2.4 9.9 2.4 9.8-2.4 12.4-1.3 20.2"/>
<path d="M765.2 380l3.7 6.2 4.9 4.9 3.7 8.6 6.1 4.9 7.4 3.7 6.2 4.9 2.4 8.7 3.7 7.3 2.5 9.9"/>
<path d="M183.5 606l-5 7.4-1.2 9.8 4.9 7.4 7.4 9.9 1.2 7.4 1.3 7.3 3.7 8.7 2.4 3.7"/>
<path d="M280.3 540l2 49.2 2.5 59.1"/>
<path d="M537.2 594.2l-193.3 0 1.2 4.9-3.7 6.2 2.5 4.9 6.1 4.9 5 4.9 3.6 5 0.5 6.1-2.9 6.2 1.2 4.9 3.7 2.5"/>
<path d="M533.5 540l-1.2 14.8-2.5 22.1 4.9 9.9 2.5 7.4 3.7 8.6"/>
<path d="M547.7 620.3l92.3 5 104.6 6.9 0.7 5.5 1.5 7.5 1.5 4.4 5.2 1.2 4.5-0.4 0.8-5.2 1.5-7.5-0.8-6-1.5-6-0.7-5.9 1.5-6 4.4-3 4.5-1.5 3 3 6.7 2.2 8.3 2.3 3.7 1.5"/>
<path d="M44.3 570.9l-0.3 23.1 142 0"/>
<path d="M186 594l-1.5 6-1 6"/>
</g>
<g fill="none" stroke="#d2d2d2" stroke-width="1" shape-rendering="crispEdges">
<circle cx="407" cy="407" r="519.5"/>
<circle cx="407" cy="407" r="159.5" stroke-dasharray="739.1 22.0 241.0 0"/>
<circle cx="407" cy="407" r="279.5" stroke-dasharray="1304.6 22.0 429.5 0"/>
<circle cx="407" cy="407" r="399.5" stroke-dasharray="1870.1 22.0 618.0 0"/>
</g>
<circle cx="407" cy="407" r="39.5" fill="none" stroke="#f00000" stroke-width="1" shape-rendering="crispEdges" stroke-dasharray="176.6 16.0 55.5 0"/>
<g font-family="DejaVu Sans, Liberation Sans, sans-serif" font-size="10.4px" fill="#ffff99" text-anchor="middle">
<text x="405.7" y="11.4">313</text>
<text x="405.7" y="131.0">219</text>
<text x="405.7" y="251.3">125</text>
<text x="405.7" y="370.7">31</text>
</g>
<g stroke="#f8f010" stroke-width="1" fill="none"><path shape-rendering="crispEdges" d="M178.0 19.5 h7.0M181.5 16.0 v7.0"/></g>
<g stroke="#e8861a" stroke-width="1" fill="none"><circle cx="195.5" cy="25.5" r="4.2"/><path shape-rendering="crispEdges" d="M193.0 25.5 h5.0"/></g>
<g stroke="#f2a810" stroke-width="1" fill="none"><path shape-rendering="crispEdges" d="M255.0 21.5 h7.0M258.5 18.0 v7.0"/></g>
<g stroke="#e2621a" stroke-width="1" fill="none"><path shape-rendering="crispEdges" d="M264.0 16.5 h7.0"/></g>
<g stroke="#f8f010" stroke-width="1" fill="none"><circle cx="247.5" cy="42.5" r="4.2"/><path shape-rendering="crispEdges" d="M245.0 42.5 h5.0"/></g>
<g stroke="#f8f010" stroke-width="1" fill="none"><path shape-rendering="crispEdges" d="M251.0 42.5 h7.0"/></g>
<g stroke="#f2a810" stroke-width="1" fill="none"><circle cx="252.5" cy="50.5" r="4.2"/><path shape-rendering="crispEdges" d="M250.0 50.5 h5.0M252.5 48.0 v5.0"/></g>
<g stroke="#f2a810" stroke-width="1" fill="none"><path shape-rendering="crispEdges" d="M123.0 40.5 h7.0M126.5 37.0 v7.0"/></g>
<g stroke="#e8861a" stroke-width="1" fill="none"><path shape-rendering="crispEdges" d="M177.0 45.5 h7.0"/></g>
<g stroke="#f2a810" stroke-width="1" fill="none"><path shape-rendering="crispEdges" d="M121.0 56.5 h7.0M124.5 53.0 v7.0"/></g>
<g stroke="#f2a810" stroke-width="1" fill="none"><path shape-rendering="crispEdges" d="M127.0 56.5 h7.0"/></g>
<g stroke="#10e8f0" stroke-width="1" fill="none"><path shape-rendering="crispEdges" d="M134.0 57.5 h7.0M137.5 54.0 v7.0"/></g>
<g stroke="#f2a810" stroke-width="1" fill="none"><circle cx="151.5" cy="54.5" r="4.2"/><path shape-rendering="crispEdges" d="M149.0 54.5 h5.0M151.5 52.0 v5.0"/></g>
<g stroke="#f8f010" stroke-width="1" fill="none"><path shape-rendering="crispEdges" d="M145.0 67.5 h7.0"/></g>
<g stroke="#f2cc08" stroke-width="1" fill="none"><path shape-rendering="crispEdges" d="M74.0 74.5 h7.0"/></g>
<g stroke="#f2cc08" stroke-width="1" fill="none"><path shape-rendering="crispEdges" d="M104.0 73.5 h7.0"/></g>
<g stroke="#f2cc08" stroke-width="1" fill="none"><path shape-rendering="crispEdges" d="M121.0 72.5 h7.0"/></g>
<g stroke="#f8f010" stroke-width="1" fill="none"><path shape-rendering="crispEdges" d="M90.0 82.5 h7.0M93.5 79.0 v7.0"/></g>
<g stroke="#e8861a" stroke-width="1" fill="none"><path shape-rendering="crispEdges" d="M97.0 85.5 h7.0"/></g>
<g stroke="#e8861a" stroke-width="1" fill="none"><path shape-rendering="crispEdges" d="M69.0 88.5 h7.0"/></g>
<g stroke="#10e8f0" stroke-width="1" fill="none"><circle cx="136.5" cy="83.5" r="4.2"/><path shape-rendering="crispEdges" d="M134.0 83.5 h5.0M136.5 81.0 v5.0"/></g>
<g stroke="#e8861a" stroke-width="1" fill="none"><circle cx="134.5" cy="91.5" r="4.2"/><path shape-rendering="crispEdges" d="M132.0 91.5 h5.0M134.5 89.0 v5.0"/></g>
<g stroke="#e2621a" stroke-width="1" fill="none"><circle cx="136.5" cy="93.5" r="4.2"/><path shape-rendering="crispEdges" d="M134.0 93.5 h5.0M136.5 91.0 v5.0"/></g>
<g stroke="#f2a810" stroke-width="1" fill="none"><path shape-rendering="crispEdges" d="M126.0 94.5 h7.0"/></g>
<g stroke="#e8861a" stroke-width="1" fill="none"><circle cx="158.5" cy="75.5" r="4.2"/><path shape-rendering="crispEdges" d="M156.0 75.5 h5.0"/></g>
<g stroke="#e2621a" stroke-width="1" fill="none"><circle cx="172.5" cy="76.5" r="4.2"/><path shape-rendering="crispEdges" d="M170.0 76.5 h5.0"/></g>
<g stroke="#e2621a" stroke-width="1" fill="none"><circle cx="165.5" cy="83.5" r="4.2"/><path shape-rendering="crispEdges" d="M163.0 83.5 h5.0"/></g>
<g stroke="#e2621a" stroke-width="1" fill="none"><circle cx="171.5" cy="86.5" r="4.2"/><path shape-rendering="crispEdges" d="M169.0 86.5 h5.0"/></g>
<g stroke="#f2a810" stroke-width="1" fill="none"><path shape-rendering="crispEdges" d="M180.0 77.5 h7.0M183.5 74.0 v7.0"/></g>
<g stroke="#f2a810" stroke-width="1" fill="none"><circle cx="199.5" cy="76.5" r="4.2"/><path shape-rendering="crispEdges" d="M197.0 76.5 h5.0"/></g>
<g stroke="#f2a810" stroke-width="1" fill="none"><path shape-rendering="crispEdges" d="M178.0 93.5 h7.0M181.5 90.0 v7.0"/></g>
<g stroke="#e2621a" stroke-width="1" fill="none"><circle cx="168.5" cy="99.5" r="4.2"/><path shape-rendering="crispEdges" d="M166.0 99.5 h5.0"/></g>
<g stroke="#f2a810" stroke-width="1" fill="none"><circle cx="173.5" cy="98.5" r="4.2"/><path shape-rendering="crispEdges" d="M171.0 98.5 h5.0"/></g>
<g stroke="#f2a810" stroke-width="1" fill="none"><path shape-rendering="crispEdges" d="M171.0 100.5 h7.0"/></g>
<g stroke="#f2a810" stroke-width="1" fill="none"><path shape-rendering="crispEdges" d="M164.0 107.5 h7.0M167.5 104.0 v7.0"/></g>
<g stroke="#e2621a" stroke-width="1" fill="none"><path shape-rendering="crispEdges" d="M171.0 103.5 h7.0M174.5 100.0 v7.0"/></g>
<g stroke="#f8f010" stroke-width="1" fill="none"><path shape-rendering="crispEdges" d="M175.0 111.5 h7.0M178.5 108.0 v7.0"/></g>
<g stroke="#f8f010" stroke-width="1" fill="none"><circle cx="201.5" cy="99.5" r="4.2"/><path shape-rendering="crispEdges" d="M199.0 99.5 h5.0M201.5 97.0 v5.0"/></g>
<g stroke="#f8f010" stroke-width="1" fill="none"><path shape-rendering="crispEdges" d="M201.0 94.5 h7.0"/></g>
<g stroke="#e8861a" stroke-width="1" fill="none"><path shape-rendering="crispEdges" d="M234.0 97.5 h7.0"/></g>
<g stroke="#f2a810" stroke-width="1" fill="none"><circle cx="102.5" cy="97.5" r="4.2"/><path shape-rendering="crispEdges" d="M100.0 97.5 h5.0"/></g>
<g stroke="#f2a810" stroke-width="1" fill="none"><circle cx="105.5" cy="98.5" r="4.2"/><path shape-rendering="crispEdges" d="M103.0 98.5 h5.0"/></g>
<g stroke="#e2621a" stroke-width="1" fill="none"><path shape-rendering="crispEdges" d="M107.0 105.5 h7.0M110.5 102.0 v7.0"/></g>
<g stroke="#e2621a" stroke-width="1" fill="none"><path shape-rendering="crispEdges" d="M110.0 105.5 h7.0"/></g>
<g stroke="#e8861a" stroke-width="1" fill="none"><circle cx="102.5" cy="121.5" r="4.2"/><path shape-rendering="crispEdges" d="M100.0 121.5 h5.0"/></g>
<g stroke="#e8861a" stroke-width="1" fill="none"><circle cx="109.5" cy="117.5" r="4.2"/><path shape-rendering="crispEdges" d="M107.0 117.5 h5.0M109.5 115.0 v5.0"/></g>
<g stroke="#e8861a" stroke-width="1" fill="none"><circle cx="113.5" cy="118.5" r="4.2"/><path shape-rendering="crispEdges" d="M111.0 118.5 h5.0M113.5 116.0 v5.0"/></g>
<g stroke="#e8861a" stroke-width="1" fill="none"><path shape-rendering="crispEdges" d="M106.0 112.5 h7.0"/></g>
<g stroke="#e8861a" stroke-width="1" fill="none"><circle cx="124.5" cy="126.5" r="4.2"/><path shape-rendering="crispEdges" d="M122.0 126.5 h5.0"/></g>
<g stroke="#f2a810" stroke-width="1" fill="none"><circle cx="140.5" cy="123.5" r="4.2"/><path shape-rendering="crispEdges" d="M138.0 123.5 h5.0M140.5 121.0 v5.0"/></g>
<g stroke="#f2a810" stroke-width="1" fill="none"><path shape-rendering="crispEdges" d="M144.0 120.5 h7.0"/></g>
<g stroke="#f8f010" stroke-width="1" fill="none"><circle cx="145.5" cy="130.5" r="4.2"/><path shape-rendering="crispEdges" d="M143.0 130.5 h5.0M145.5 128.0 v5.0"/></g>
<g stroke="#e2621a" stroke-width="1" fill="none"><circle cx="154.5" cy="130.5" r="4.2"/><path shape-rendering="crispEdges" d="M152.0 130.5 h5.0"/></g>
<g stroke="#e2621a" stroke-width="1" fill="none"><path shape-rendering="crispEdges" d="M82.0 143.5 h7.0M85.5 140.0 v7.0"/></g>
<g stroke="#e8861a" stroke-width="1" fill="none"><path shape-rendering="crispEdges" d="M130.0 141.5 h7.0M133.5 138.0 v7.0"/></g>
<g stroke="#f2a810" stroke-width="1" fill="none"><path shape-rendering="crispEdges" d="M142.0 144.5 h7.0"/></g>
<g stroke="#f2a810" stroke-width="1" fill="none"><path shape-rendering="crispEdges" d="M163.0 143.5 h7.0M166.5 140.0 v7.0"/></g>
<g stroke="#f2a810" stroke-width="1" fill="none"><path shape-rendering="crispEdges" d="M160.0 147.5 h7.0"/></g>
<g stroke="#e2621a" stroke-width="1" fill="none"><path shape-rendering="crispEdges" d="M182.0 143.5 h7.0M185.5 140.0 v7.0"/></g>
<g stroke="#e8861a" stroke-width="1" fill="none"><path shape-rendering="crispEdges" d="M185.0 125.5 h7.0"/></g>
<g stroke="#e2621a" stroke-width="1" fill="none"><path shape-rendering="crispEdges" d="M202.0 139.5 h7.0"/></g>
<g stroke="#f2a810" stroke-width="1" fill="none"><circle cx="229.5" cy="150.5" r="4.2"/><path shape-rendering="crispEdges" d="M227.0 150.5 h5.0"/></g>
<g stroke="#e2621a" stroke-width="1" fill="none"><circle cx="174.5" cy="157.5" r="4.2"/><path shape-rendering="crispEdges" d="M172.0 157.5 h5.0"/></g>
<g stroke="#f2a810" stroke-width="1" fill="none"><path shape-rendering="crispEdges" d="M100.0 172.5 h7.0"/></g>
<g stroke="#f8f010" stroke-width="1" fill="none"><circle cx="170.5" cy="181.5" r="4.2"/><path shape-rendering="crispEdges" d="M168.0 181.5 h5.0"/></g>
<g stroke="#f8f010" stroke-width="1" fill="none"><circle cx="171.5" cy="189.5" r="4.2"/><path shape-rendering="crispEdges" d="M169.0 189.5 h5.0M171.5 187.0 v5.0"/></g>
<g stroke="#f2a810" stroke-width="1" fill="none"><path shape-rendering="crispEdges" d="M563.0 764.5 h7.0M566.5 761.0 v7.0"/></g>
<rect x="8" y="758" width="245" height="47" fill="#000"/>
<rect x="9.5" y="759.5" width="242" height="43" fill="#000" stroke="#9a9a9a" stroke-width="1"/>
<g font-family="DejaVu Sans Condensed, DejaVu Sans, Liberation Sans, sans-serif" font-size="9.4px" fill="#f0f0f0">
<text x="13.4" y="771.0">Symbols</text>
<text x="53.0" y="771.0">-CG</text>
<text x="77.7" y="771.0">-IC</text>
<text x="98.7" y="771.0">+CG</text>
<text x="124.0" y="771.0">+IC</text>
<text x="153.0" y="771.0" textLength="89.6" lengthAdjust="spacingAndGlyphs">Strike age color codes</text>
<text x="13.4" y="783.8">Recent</text>
<text x="13.4" y="796.7">Old</text>
<text x="153.0" y="783.8" fill="#f0d000">15+</text>
<text x="190.8" y="783.8" fill="#f0a800">30+</text>
<text x="223.4" y="783.8" fill="#e89800">45+</text>
<text x="153.0" y="796.7" fill="#e08000">60+</text>
<text x="190.8" y="796.7" fill="#e86000">75+</text>
<text x="223.4" y="796.7" fill="#f04000">90+</text>
</g>
<g stroke="#00e8f0" stroke-width="1" fill="none"><circle cx="60.5" cy="780.5" r="4.2"/><path shape-rendering="crispEdges" d="M58.0 780.5 h5.0"/></g>
<g stroke="#00e8f0" stroke-width="1" fill="none"><path shape-rendering="crispEdges" d="M82.0 780.5 h7.0"/></g>
<g stroke="#00e8f0" stroke-width="1" fill="none"><circle cx="110.5" cy="780.5" r="4.2"/><path shape-rendering="crispEdges" d="M108.0 780.5 h5.0M110.5 778.0 v5.0"/></g>
<g stroke="#00e8f0" stroke-width="1" fill="none"><path shape-rendering="crispEdges" d="M132.0 780.5 h7.0M135.5 777.0 v7.0"/></g>
<g stroke="#f8f000" stroke-width="1" fill="none"><circle cx="60.5" cy="793.5" r="4.2"/><path shape-rendering="crispEdges" d="M58.0 793.5 h5.0"/></g>
<g stroke="#f8f000" stroke-width="1" fill="none"><path shape-rendering="crispEdges" d="M82.0 793.5 h7.0"/></g>
<g stroke="#f8f000" stroke-width="1" fill="none"><circle cx="110.5" cy="793.5" r="4.2"/><path shape-rendering="crispEdges" d="M108.0 793.5 h5.0M110.5 791.0 v5.0"/></g>
<g stroke="#f8f000" stroke-width="1" fill="none"><path shape-rendering="crispEdges" d="M132.0 793.5 h7.0M135.5 790.0 v7.0"/></g>
<rect x="685.5" y="792" width="121" height="15" fill="#000"/>
<text x="689.3" y="802.3" font-family="DejaVu Sans Condensed, DejaVu Sans, Liberation Sans, sans-serif" font-size="9.4px" fill="#ffffff" textLength="112.5" lengthAdjust="spacingAndGlyphs">©2005 Astrogenic Systems</text>
</svg>
</div>
<div class="pnl" style="top:8px;height:318px;"></div>
<div class="pnl" style="top:333px;height:113px;"></div>
<div class="pnl" style="top:454px;height:347px;"></div>

<div class="btn b" style="left:819px;top:16px;width:58px;height:18px;line-height:17px;background:#5a0000;color:#d8d8d8;font-size:13.4px;letter-spacing:0.5px;text-indent:0.5px;">STRIKE</div>
<div class="btn b" style="left:883px;top:16px;width:58px;height:18px;line-height:17px;background:#333;color:#c8c8c8;font-size:13.4px;letter-spacing:0.8px;text-indent:0.8px;">NOISE</div>
<div class="btn b" style="left:994px;top:16px;width:128px;height:18px;line-height:17px;background:#333;font-size:13.4px;text-align:left;"><span style="position:absolute;left:4px;">Bng 322°</span><span style="position:absolute;right:3px;color:#00e000;">343mi</span></div>

<div class="btn lbl" style="left:821px;top:64px;width:82px;">Strikes/min</div>
<div class="btn lbl" style="left:931px;top:64px;width:82px;">Close/min</div>
<div class="btn lbl" style="left:1041px;top:64px;width:82px;letter-spacing:-0.3px;">Noises/min</div>
<div class="big" style="left:821px;top:88.5px;width:83px;">2</div>
<div class="big" style="left:931px;top:88.5px;width:83px;">0</div>
<div class="big" style="left:1041px;top:88.5px;width:83px;color:#c0c0c0;">0</div>

<div class="t r" style="left:803px;width:100px;top:131px;">Total Strikes</div>
<div class="t r" style="left:913px;width:100px;top:131px;">Total Close</div>
<div class="t r g" style="left:1023px;width:100px;top:131px;">Total Noises</div>
<div class="t r" style="left:803px;width:100px;top:149px;">6843</div>
<div class="t r" style="left:913px;width:100px;top:149px;">0</div>
<div class="t r" style="left:1023px;width:100px;top:149px;color:#e0e0e0;">332</div>

<div class="t g" style="left:821px;top:203px;">Lightning type distribution</div>
<div class="hr" style="left:821px;top:217px;width:303px;"></div>

<div class="t b" style="left:821px;top:225px;">Cloud-ground</div>
<div class="t g" style="left:912px;top:225px;">+</div>
<div class="bar" style="left:925px;top:227px;"><i style="width:20px;background:#ff0000;"></i></div>
<div class="t b" style="left:979px;top:225px;">39%</div>
<div class="t b g" style="left:1015px;top:224px;">−</div>
<div class="bar" style="left:1028px;top:227px;"><i style="width:6px;background:#99ccff;"></i></div>
<div class="t b" style="left:1082px;top:225px;">12%</div>
<div class="t b" style="left:821px;top:249px;color:#c8c4bc;">Count</div>
<div class="t b" style="left:925px;top:249px;">2663</div>
<div class="t b" style="left:1028px;top:249px;">834</div>

<div class="t b" style="left:821px;top:279px;">Intracloud</div>
<div class="t g" style="left:912px;top:279px;">+</div>
<div class="bar" style="left:925px;top:281px;"><i style="width:6px;background:#ee66bb;"></i></div>
<div class="t b" style="left:979px;top:279px;">13%</div>
<div class="t b g" style="left:1015px;top:278px;">−</div>
<div class="bar" style="left:1028px;top:281px;"><i style="width:18px;background:#00ff00;"></i></div>
<div class="t b" style="left:1082px;top:279px;">36%</div>
<div class="t b" style="left:821px;top:303px;color:#c8c4bc;">Count</div>
<div class="t b" style="left:925px;top:303px;">865</div>
<div class="t b" style="left:1028px;top:303px;">2481</div>

<div class="t" style="left:821px;top:337px;height:22px;line-height:22px;font-family:'DejaVu Sans','Liberation Sans',sans-serif;font-weight:bold;font-size:15.5px;letter-spacing:0.7px;color:#00e800;">10/24/2025 12:39:16 PM</div>
<div class="hr" style="left:821px;top:358px;width:302px;"></div>

<div class="t" style="left:821px;top:376px;">Squelch</div>
<div class="t" style="left:909px;top:376px;">0</div>
<div class="t" style="left:981px;top:376px;">Upload</div>
<div class="t g" style="left:1061px;top:376px;">Disabled</div>
<div class="t" style="left:821px;top:396px;">Persistence</div>
<div class="t" style="left:909px;top:396px;">90 min</div>
<div class="t" style="left:981px;top:396px;">Capture</div>
<div class="t gr" style="left:1061px;top:396px;">Active</div>
<div class="t" style="left:821px;top:416px;">Range</div>
<div class="t" style="left:909px;top:416px;">313 mi</div>
<div class="t" style="left:981px;top:416px;">Receiver</div>
<div class="t gr" style="left:1061px;top:416px;">Enabled</div>

<div class="t g" style="left:821px;top:463px;">Uptime</div>
<div class="t" style="left:909px;top:463px;">176:09</div>
<div class="t g" style="left:981px;top:463px;">Peak time</div>
<div class="t g" style="left:1061px;top:463px;">Plot</div>
<div class="t g" style="left:821px;top:486px;">Peak rate</div>
<div class="t" style="left:909px;top:486px;">39/min</div>
<div class="t" style="left:981px;top:486px;">3:14 AM</div>
<div class="t" style="left:1061px;top:486px;">Strike</div>
<div class="t g" style="left:822px;top:516px;">Trend graph</div>
<div class="t" style="left:908px;top:516px;">60 min</div>
<svg id="graph" style="position:absolute;left:0;top:0" width="1138" height="812" viewBox="0 0 1138 812">
<g stroke="#d8d8d8" stroke-width="1" fill="none" shape-rendering="crispEdges">
<line x1="822" y1="777.5" x2="1089" y2="777.5"/>
<line x1="1088.5" y1="542" x2="1088.5" y2="778"/>
<line x1="822.5" y1="777" x2="822.5" y2="780"/>
<line x1="866.8" y1="777" x2="866.8" y2="780"/>
<line x1="911.1" y1="777" x2="911.1" y2="780"/>
<line x1="955.4" y1="777" x2="955.4" y2="780"/>
<line x1="999.7" y1="777" x2="999.7" y2="780"/>
<line x1="1044.0" y1="777" x2="1044.0" y2="780"/>
<line x1="1088.3" y1="777" x2="1088.3" y2="780"/>
<line x1="1084" y1="699.0" x2="1089" y2="699.0"/>
<line x1="1084" y1="620.6" x2="1089" y2="620.6"/>
<line x1="1084" y1="542.2" x2="1089" y2="542.2"/>
<line x1="1086" y1="738.2" x2="1091" y2="738.2"/>
<line x1="1086" y1="659.8" x2="1091" y2="659.8"/>
<line x1="1086" y1="581.4" x2="1091" y2="581.4"/>
</g>
<polyline fill="none" stroke="#00e000" stroke-width="1" points="822.2,774.8 823.2,777.4"/>
<polyline fill="none" stroke="#00e000" stroke-width="1" points="826.2,777.4 828.2,769.5 831.5,769.5 832.1,777.4"/>
<polyline fill="none" stroke="#99ccff" stroke-width="1" points="826.9,769.5 828.8,761.6 831.5,761.6 832.1,769.5"/>
<polyline fill="none" stroke="#00e000" stroke-width="1" points="871.7,777.4 873.7,769.5 876.9,769.5 878.9,777.4"/>
<polyline fill="none" stroke="#ee66bb" stroke-width="1" points="874.0,761.6 875.0,769.5 874.6,753.4"/>
<polyline fill="none" stroke="#00e000" stroke-width="1" points="888.8,777.4 890.8,769.5 892.8,769.5 894.1,777.4"/>
<polyline fill="none" stroke="#99ccff" stroke-width="1" points="892.8,769.5 894.7,777.4"/>
<polyline fill="none" stroke="#00e000" stroke-width="1" points="898.7,777.4 900.7,769.5 902.6,769.5 904.0,777.4"/>
<polyline fill="none" stroke="#99ccff" stroke-width="1" points="899.4,777.4 900.9,769.5"/>
<polyline fill="none" stroke="#ee66bb" stroke-width="1" points="926.4,777.4 927.7,769.5 929.4,769.5"/>
<polyline fill="none" stroke="#ff0000" stroke-width="1" points="929.4,769.5 930.7,777.4"/>
<polyline fill="none" stroke="#ee66bb" stroke-width="1" points="933.0,777.4 934.3,769.5 936.9,769.5 938.2,777.4"/>
<polyline fill="none" stroke="#00e000" stroke-width="1" points="936.9,777.4 938.2,769.5"/>
<polyline fill="none" stroke="#00e000" stroke-width="1" points="945.5,777.4 947.5,769.5 950.5,769.5 951.4,777.4"/>
<polyline fill="none" stroke="#00e000" stroke-width="1" points="997.2,777.4 998.5,769.5 999.2,761.6 1001.4,761.6 1001.8,769.5"/>
<polyline fill="none" stroke="#99ccff" stroke-width="1" points="998.5,769.5 1001.1,769.5 1002.4,777.4"/>
<polyline fill="none" stroke="#00e000" stroke-width="1" points="1013.7,777.4 1014.6,769.5 1018.3,769.5 1019.6,777.4"/>
<polyline fill="none" stroke="#99ccff" stroke-width="1" points="1020.2,769.5 1020.9,777.4"/>
<polyline fill="none" stroke="#ff0000" stroke-width="1.5" points="1024.6,769.5 1024.9,777.4"/>
<polyline fill="none" stroke="#00e000" stroke-width="1.5" points="1051.9,769.5 1052.3,777.4"/>
<polyline fill="none" stroke="#00e000" stroke-width="1" points="1059.1,777.4 1060.4,769.5 1062.4,769.5"/>
<polyline fill="none" stroke="#99ccff" stroke-width="1" points="1058.5,777.4 1059.8,771.5"/>
<polyline fill="none" stroke="#00e000" stroke-width="1" points="1076.9,777.4 1079.6,769.5 1081.5,761.6 1082.9,769.5 1084.8,769.5 1085.7,777.4"/>
<polyline fill="none" stroke="#99ccff" stroke-width="1" points="1082.6,777.4 1083.9,769.5"/>
<polyline fill="none" stroke="#ffffff" stroke-width="1" points="822.5,777.4 822.5,762.0 824.2,777.4 825.5,777.4 828.2,746.6 831.5,746.6 832.8,777.4 840.0,777.4 842.0,769.5 844.7,769.5 846.4,777.4 847.7,769.5 850.3,769.5 852.6,777.4 853.2,777.4 855.2,769.5 857.8,769.5 859.8,777.4 862.4,777.4 864.4,769.5 867.5,769.5 869.0,777.4 869.7,777.4 871.7,769.5 873.0,769.5 874.3,753.4 874.6,753.4 876.3,760.3 878.3,769.5 879.6,777.4 888.2,777.4 890.8,761.6 892.8,761.6 895.4,777.4 897.4,777.4 900.4,761.6 902.3,761.6 905.3,777.4 909.2,777.4 911.6,761.6 914.1,761.6 916.5,777.4 918.9,769.5 921.5,769.5 923.7,777.4 925.1,777.4 927.3,761.6 929.4,761.6 931.6,777.4 933.6,761.6 936.3,761.6 938.9,769.5 941.5,769.5 943.5,777.4 944.8,777.4 947.5,761.6 950.5,761.6 952.7,777.4 954.7,777.4 957.1,769.5 960.0,769.5 962.6,777.4"/>
<polyline fill="none" stroke="#ffffff" stroke-width="1" points="953.4,777.4 955.7,777.4 957.9,769.5 960.3,769.5 962.2,777.4 968.2,777.4 969.9,769.5 972.5,769.5 974.5,777.4 987.3,777.4 989.5,769.5 992.2,769.5 993.9,777.4 996.5,777.4 997.8,759.6 999.2,746.6 1001.4,746.6 1002.4,759.6 1003.5,769.5 1004.8,769.5 1005.7,777.4 1007.1,777.4 1009.0,769.5 1011.7,769.5 1013.0,777.4 1014.6,761.6 1019.6,761.6 1021.6,769.5 1030.8,769.5 1032.1,777.4 1040.0,777.4 1042.3,769.5 1045.7,769.5 1046.6,777.4 1048.6,769.5 1055.8,769.5 1057.8,777.4 1060.4,761.6 1061.5,761.6 1064.4,777.4 1069.0,777.4 1071.0,769.5 1073.6,769.5 1075.6,777.4 1079.6,759.6 1081.5,746.6 1082.9,757.6 1084.2,753.7 1085.5,761.6 1087.5,769.5 1088.1,777.4"/>
<g fill="#c8c8c8" font-family="DejaVu Sans Condensed, DejaVu Sans, Liberation Sans, sans-serif" font-size="12.4px">
<text x="1092" y="703.5">10</text>
<text x="1092" y="625.1">20</text>
<text x="1092" y="546.7">30</text>
<text x="827.2" y="792.5" text-anchor="middle">60</text>
<text x="871.5" y="792.5" text-anchor="middle">50</text>
<text x="915.8" y="792.5" text-anchor="middle">40</text>
<text x="960.1" y="792.5" text-anchor="middle">30</text>
<text x="1004.4" y="792.5" text-anchor="middle">20</text>
<text x="1048.7" y="792.5" text-anchor="middle">10</text>
<text x="1090.0" y="792.5" text-anchor="middle">0</text>
<text x="1099" y="792.5">min</text>
</g>
</svg>
</body></html>
